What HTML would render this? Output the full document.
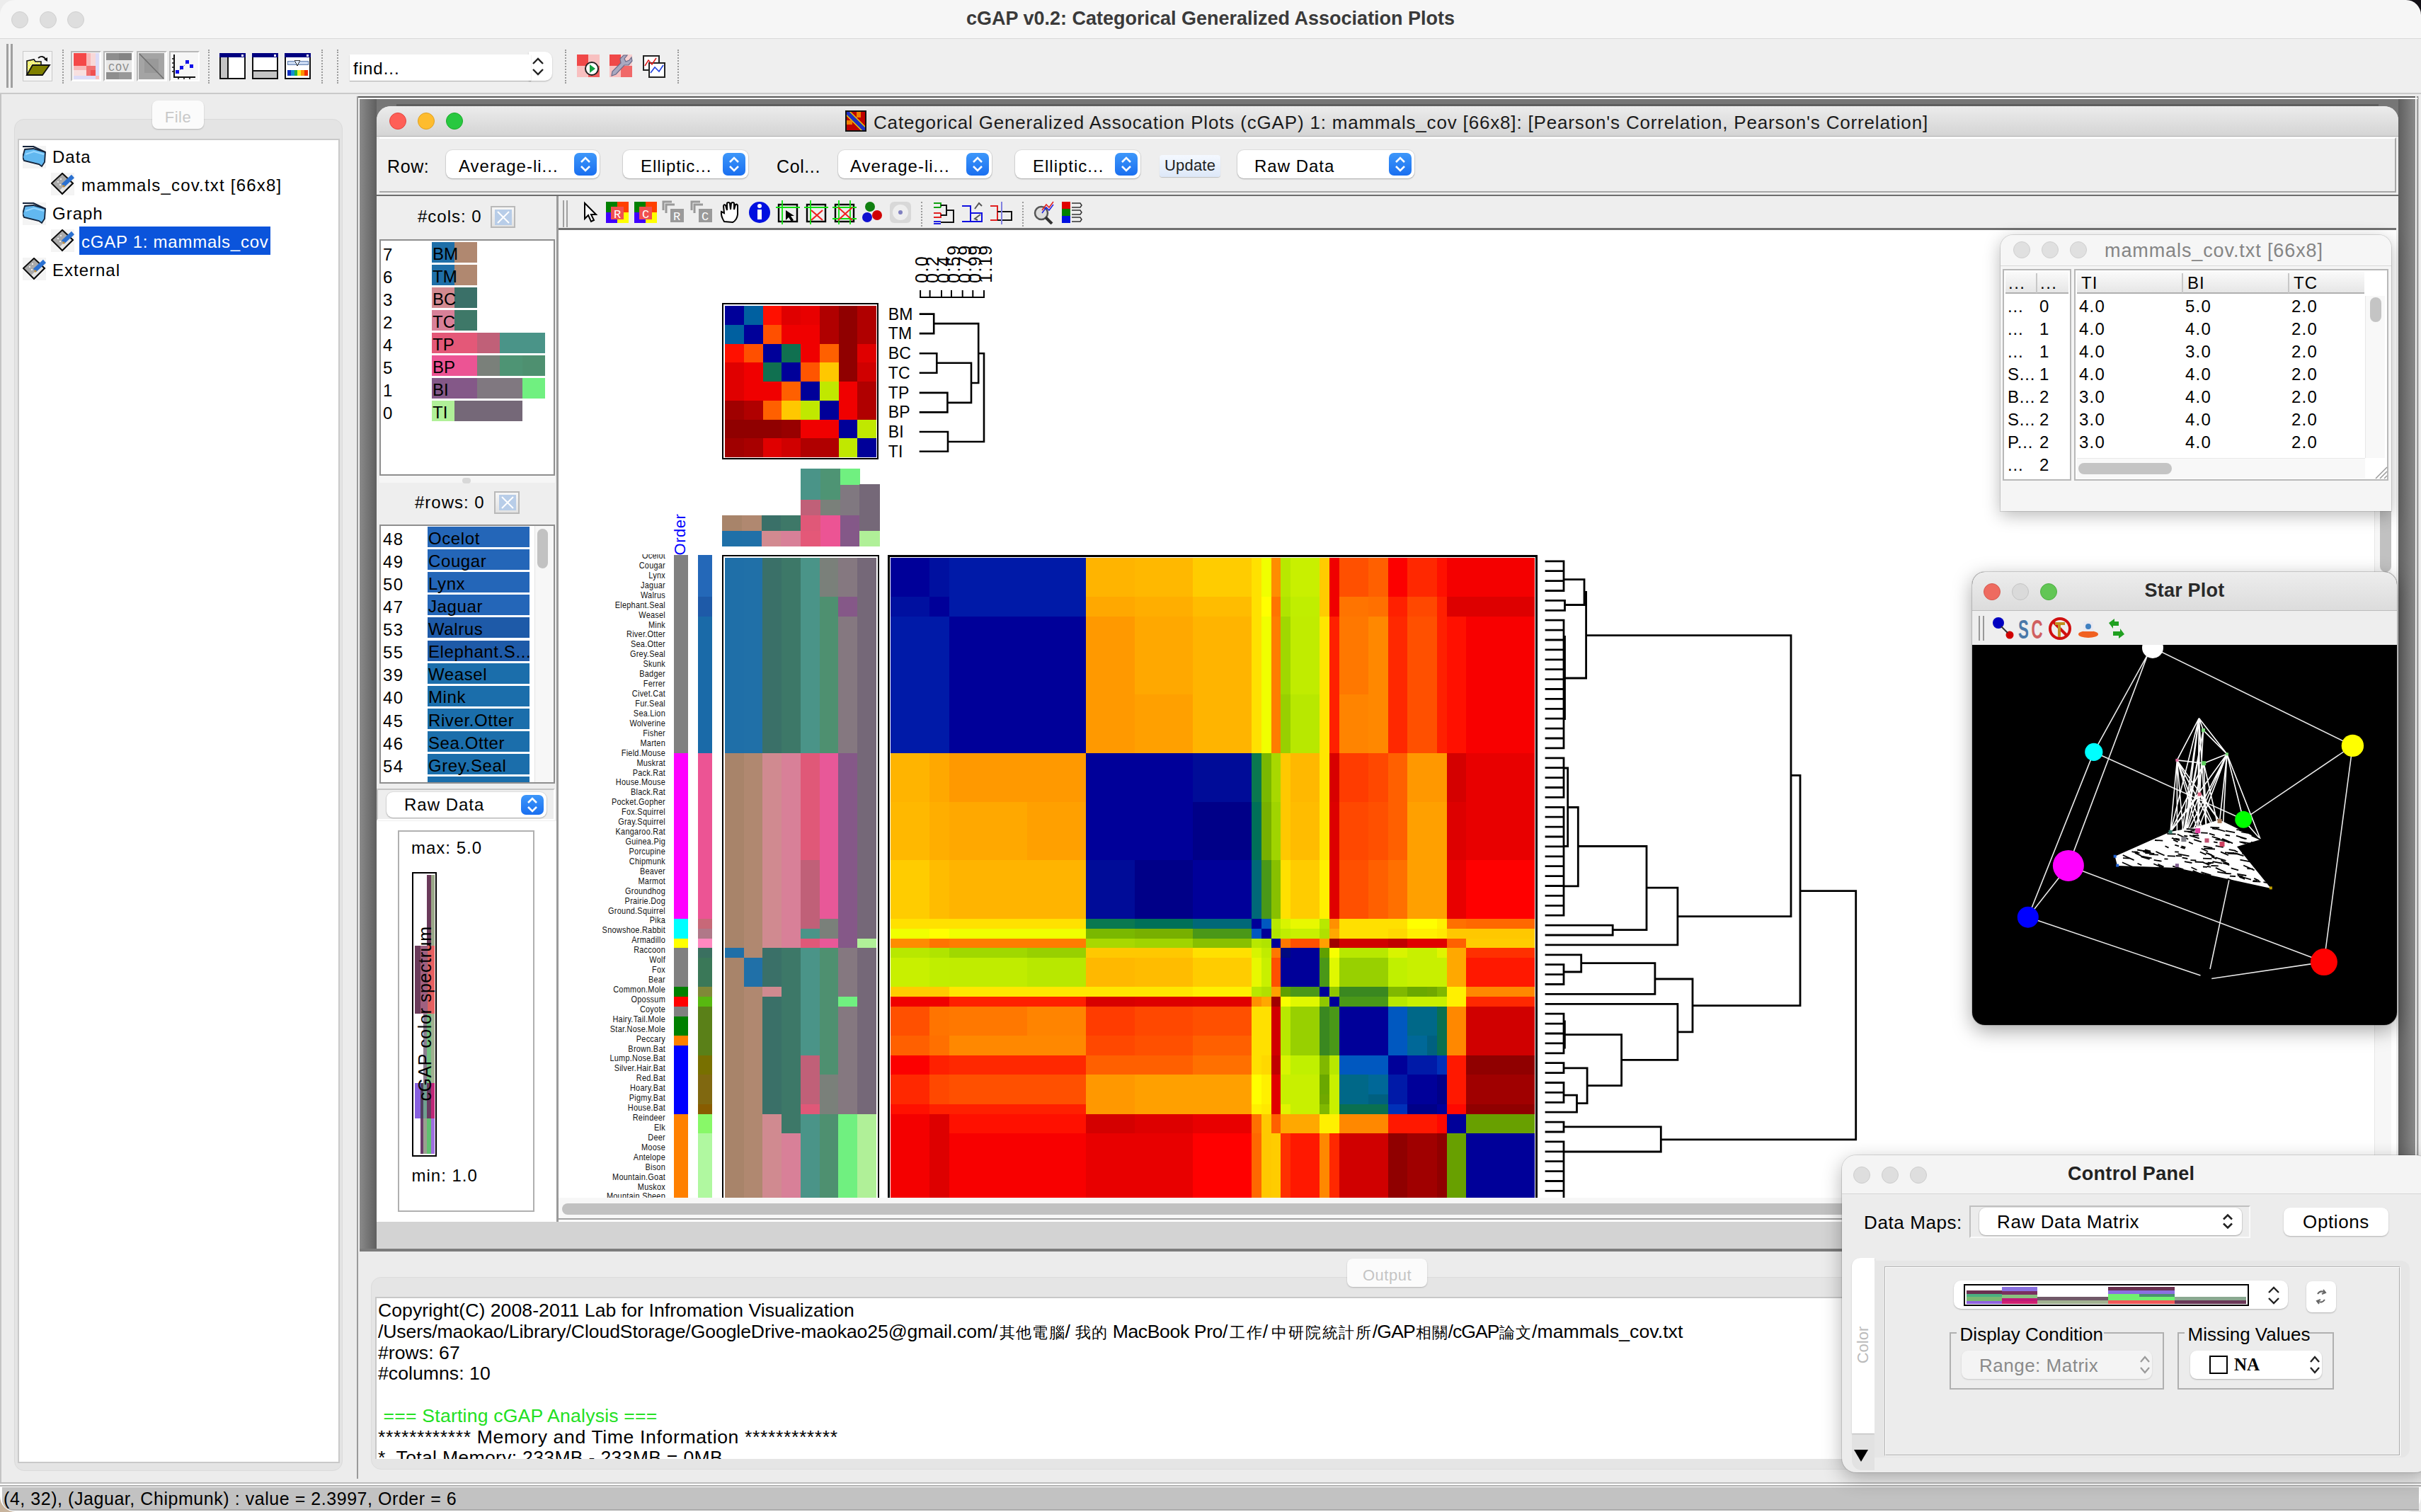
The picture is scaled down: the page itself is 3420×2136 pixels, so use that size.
<!DOCTYPE html><html><head><meta charset="utf-8"><style>
html,body{margin:0;padding:0;width:3420px;height:2136px;overflow:hidden;font-family:"Liberation Sans", sans-serif;}
</style></head><body><div style="position:relative;width:3420px;height:2136px;overflow:hidden">
<div style="position:absolute;left:0px;top:0px;width:3420px;height:2136px;background:#ececec"></div><div style="position:absolute;left:3390px;top:0px;width:30px;height:30px;background:#121016"></div><div style="position:absolute;left:0px;top:2100px;width:36px;height:36px;background:#c8b49e"></div><div style="position:absolute;left:0px;top:0px;width:3420px;height:55px;background:#f6f6f6;border-top-right-radius:21px;border-top-left-radius:21px;border-bottom:1px solid #d9d9d9;box-sizing:border-box"></div><div style="position:absolute;left:16px;top:16px;width:24px;height:24px;border-radius:50%;background:#dedede;box-sizing:border-box;border:1px solid #d0d0d0"></div><div style="position:absolute;left:56px;top:16px;width:24px;height:24px;border-radius:50%;background:#dedede;box-sizing:border-box;border:1px solid #d0d0d0"></div><div style="position:absolute;left:95px;top:16px;width:24px;height:24px;border-radius:50%;background:#dedede;box-sizing:border-box;border:1px solid #d0d0d0"></div><div style="position:absolute;left:710.0px;width:2000px;text-align:center;top:13.1px;font-size:27px;line-height:27px;color:#3a3a3a;font-weight:bold;letter-spacing:0px;white-space:pre;">cGAP v0.2: Categorical Generalized Association Plots</div><div style="position:absolute;left:0px;top:55px;width:3420px;height:77px;background:#efefef"></div><div style="position:absolute;left:0px;top:131px;width:3420px;height:2px;background:#c9c9c9"></div><div style="position:absolute;left:0px;top:133px;width:504px;height:1962px;background:#ececec"></div><div style="position:absolute;left:0px;top:133px;width:2px;height:1961px;background:#c4c4c4"></div><div style="position:absolute;left:0px;top:2094px;width:3420px;height:2px;background:#bcbcbc"></div><div style="position:absolute;left:0px;top:2096px;width:3420px;height:40px;background:#fff;border-bottom-left-radius:22px;border-bottom-right-radius:22px;overflow:hidden"></div><div style="position:absolute;left:0px;top:2098px;width:3420px;height:2px;background:#b0b0b0"></div><div style="position:absolute;left:3px;top:2101px;width:3414px;height:31px;background:#c2c2c2;border-bottom:2px solid #ababab;border-bottom-left-radius:16px;box-sizing:content-box"></div><div style="position:absolute;left:5.0px;top:2104.8px;font-size:25px;line-height:25px;color:#000;font-weight:normal;letter-spacing:0.55px;white-space:pre;">(4, 32), (Jaguar, Chipmunk) : value = 2.3997, Order = 6</div><div style="position:absolute;left:20px;top:168px;width:464px;height:1910px;background:#e4e4e4;border-radius:14px;border:1px solid #dadada;box-sizing:border-box"></div><div style="position:absolute;left:215px;top:142px;width:73px;height:40px;background:#fbfbfb;border-radius:8px;box-shadow:0 1px 2px rgba(0,0,0,0.22)"></div><div style="position:absolute;left:-748.5px;width:2000px;text-align:center;top:155.4px;font-size:22px;line-height:22px;color:#c8c8c8;font-weight:normal;letter-spacing:0.5px;white-space:pre;text-shadow:0 1px 0 #fff">File</div><div style="position:absolute;left:25px;top:196px;width:455px;height:1871px;background:#fff;border:2px solid #c9c9c9;box-sizing:border-box"></div><svg style="position:absolute;left:32px;top:206px" width="33" height="32"><rect x="-1" y="-1" width="36" height="34" fill="#f4f4f4"/><path d="M3 5 L15 4 L32 9 L31 23 L27 29 L23 26 L2 21 L0 16 Z" fill="#62b8f0" stroke="#14233a" stroke-width="1.8"/><path d="M0 1 L15 1 L32 9" stroke="#14233a" stroke-width="2.2" fill="none"/><path d="M4 12 L16 8 L30 12" stroke="#9ad8ff" stroke-width="2" fill="none"/></svg><svg style="position:absolute;left:72px;top:244px" width="33" height="32"><rect x="-1" y="-1" width="36" height="34" fill="#f4f4f4"/><path d="M16 1 L31 15 L16 30 L1 15 Z" fill="#e4e4e4" stroke="#111" stroke-width="1.8"/><path d="M16 1 L1 15 L12 25 L26 11 Z" fill="#aaaaaa"/><path d="M16 1 L31 15 L16 30 L1 15 Z" fill="none" stroke="#111" stroke-width="1.8"/><circle cx="10" cy="13" r="1" fill="#fff"/><circle cx="14" cy="9" r="1" fill="#fff"/><circle cx="13" cy="17" r="1" fill="#fff"/><path d="M17 18 L31 5" stroke="#2a70d0" stroke-width="6"/><path d="M17 18 L19 20" stroke="#c09040" stroke-width="3"/></svg><svg style="position:absolute;left:32px;top:286px" width="33" height="32"><rect x="-1" y="-1" width="36" height="34" fill="#f4f4f4"/><path d="M3 5 L15 4 L32 9 L31 23 L27 29 L23 26 L2 21 L0 16 Z" fill="#62b8f0" stroke="#14233a" stroke-width="1.8"/><path d="M0 1 L15 1 L32 9" stroke="#14233a" stroke-width="2.2" fill="none"/><path d="M4 12 L16 8 L30 12" stroke="#9ad8ff" stroke-width="2" fill="none"/></svg><svg style="position:absolute;left:72px;top:324px" width="33" height="32"><rect x="-1" y="-1" width="36" height="34" fill="#f4f4f4"/><path d="M16 1 L31 15 L16 30 L1 15 Z" fill="#e4e4e4" stroke="#111" stroke-width="1.8"/><path d="M16 1 L1 15 L12 25 L26 11 Z" fill="#aaaaaa"/><path d="M16 1 L31 15 L16 30 L1 15 Z" fill="none" stroke="#111" stroke-width="1.8"/><circle cx="10" cy="13" r="1" fill="#fff"/><circle cx="14" cy="9" r="1" fill="#fff"/><circle cx="13" cy="17" r="1" fill="#fff"/><path d="M17 18 L31 5" stroke="#2a70d0" stroke-width="6"/><path d="M17 18 L19 20" stroke="#c09040" stroke-width="3"/></svg><svg style="position:absolute;left:32px;top:364px" width="33" height="32"><rect x="-1" y="-1" width="36" height="34" fill="#f4f4f4"/><path d="M16 1 L31 15 L16 30 L1 15 Z" fill="#e4e4e4" stroke="#111" stroke-width="1.8"/><path d="M16 1 L1 15 L12 25 L26 11 Z" fill="#aaaaaa"/><path d="M16 1 L31 15 L16 30 L1 15 Z" fill="none" stroke="#111" stroke-width="1.8"/><circle cx="10" cy="13" r="1" fill="#fff"/><circle cx="14" cy="9" r="1" fill="#fff"/><circle cx="13" cy="17" r="1" fill="#fff"/><path d="M17 18 L31 5" stroke="#2a70d0" stroke-width="6"/><path d="M17 18 L19 20" stroke="#c09040" stroke-width="3"/></svg><div style="position:absolute;left:74.0px;top:209.7px;font-size:24px;line-height:24px;color:#000;font-weight:normal;letter-spacing:1.0px;white-space:pre;">Data</div><div style="position:absolute;left:115.0px;top:250.2px;font-size:24px;line-height:24px;color:#000;font-weight:normal;letter-spacing:1.2px;white-space:pre;">mammals_cov.txt [66x8]</div><div style="position:absolute;left:74.0px;top:289.7px;font-size:24px;line-height:24px;color:#000;font-weight:normal;letter-spacing:1.0px;white-space:pre;">Graph</div><div style="position:absolute;left:112px;top:320px;width:270px;height:40px;background:#0b54db"></div><div style="position:absolute;left:115.0px;top:329.7px;font-size:24px;line-height:24px;color:#fff;font-weight:normal;letter-spacing:0.75px;white-space:pre;">cGAP 1: mammals_cov</div><div style="position:absolute;left:74.0px;top:369.7px;font-size:24px;line-height:24px;color:#000;font-weight:normal;letter-spacing:1.0px;white-space:pre;">External</div><div style="position:absolute;left:9px;top:62px;width:3px;height:62px;background:#a0a0a0"></div><div style="position:absolute;left:15px;top:62px;width:3px;height:62px;background:#a0a0a0"></div><div style="position:absolute;left:32px;top:72px;width:42px;height:43px;background:#f4f4f4;border:1px solid #c9c9c9;box-sizing:border-box"></div><svg style="position:absolute;left:36px;top:78px" width="36" height="32"><defs><pattern id="chk" width="4" height="4" patternUnits="userSpaceOnUse"><rect width="4" height="4" fill="#ffff40"/><rect width="2" height="2" fill="#e8e8c0"/><rect x="2" y="2" width="2" height="2" fill="#e8e8c0"/></pattern></defs><path d="M2 8 L12 6 L14 9 L22 9 L22 28 L2 28 Z" fill="url(#chk)" stroke="#111" stroke-width="1.6"/><path d="M2 28 L10 14 L34 14 L24 28 Z" fill="#808000" stroke="#111" stroke-width="1.8"/><path d="M18 4 Q24 -1 29 6" stroke="#111" stroke-width="1.8" fill="none"/><path d="M26 6 L31 9 L31 3 Z" fill="#111"/></svg><div style="position:absolute;left:88px;top:70px;width:0;height:48px;border-left:2px dotted #9a9a9a"></div><div style="position:absolute;left:100px;top:72px;width:43px;height:43px;background:#f6f6f6;border:2px solid #b8b8b8;border-right-color:#fff;border-bottom-color:#fff;box-sizing:border-box"></div><div style="position:absolute;left:146px;top:72px;width:43px;height:43px;background:#f6f6f6;border:2px solid #b8b8b8;border-right-color:#fff;border-bottom-color:#fff;box-sizing:border-box"></div><div style="position:absolute;left:193px;top:72px;width:43px;height:43px;background:#f6f6f6;border:2px solid #b8b8b8;border-right-color:#fff;border-bottom-color:#fff;box-sizing:border-box"></div><div style="position:absolute;left:239px;top:72px;width:43px;height:43px;background:#f6f6f6;border:2px solid #b8b8b8;border-right-color:#fff;border-bottom-color:#fff;box-sizing:border-box"></div><svg style="position:absolute;left:104px;top:75px" width="36" height="37" shape-rendering="crispEdges"><rect x="0" y="0" width="36" height="37" fill="#f8e0e0"/><rect x="0" y="0" width="18" height="18" fill="#f44848"/><rect x="18" y="0" width="6" height="18" fill="#f8b8b8"/><rect x="24" y="0" width="7" height="18" fill="#f8d8d8"/><rect x="31" y="0" width="5" height="37" fill="#dcdcf8"/><rect x="0" y="18" width="18" height="6" fill="#f8b8b8"/><rect x="18" y="18" width="13" height="14" fill="#f07070"/><rect x="24" y="24" width="7" height="8" fill="#f05050"/><rect x="0" y="32" width="31" height="5" fill="#dcdcf8"/><rect x="31" y="32" width="5" height="5" fill="#f8c0c0"/></svg><svg style="position:absolute;left:150px;top:75px" width="36" height="37" shape-rendering="crispEdges"><rect x="0" y="0" width="36" height="10" fill="#8e8e8e"/><rect x="18" y="0" width="18" height="10" fill="#848484"/><rect x="0" y="10" width="36" height="17" fill="#e8e8e8"/><rect x="0" y="27" width="36" height="10" fill="#8e8e8e"/><rect x="18" y="27" width="18" height="10" fill="#989898"/><text x="18" y="25" font-size="15" text-anchor="middle" fill="#8a8a8a" font-family="Liberation Mono" letter-spacing="1">COV</text></svg><svg style="position:absolute;left:196px;top:75px" width="36" height="37"><rect x="0" y="0" width="36" height="37" fill="#a4a4a4"/><rect x="8" y="8" width="20" height="20" fill="#999"/><path d="M1 1 L35 36" stroke="#6e6e6e" stroke-width="1.6"/></svg><svg style="position:absolute;left:242px;top:75px" width="36" height="37"><path d="M4 2 L4 34 L34 34" stroke="#111" stroke-width="2" fill="none"/><path d="M1 8 L4 8 M1 14 L4 14 M1 20 L4 20 M1 26 L4 26 M10 34 L10 37 M18 34 L18 37 M26 34 L26 37" stroke="#111" stroke-width="1.5"/><path d="M9 27 L15 21 L23 13 L29 19" stroke="#888" stroke-width="1" stroke-dasharray="2,2" fill="none"/><rect x="6" y="24" width="5" height="5" fill="#1010e8"/><rect x="12" y="18" width="5" height="5" fill="#1010e8"/><rect x="20" y="10" width="5" height="5" fill="#1010e8"/><rect x="26" y="16" width="5" height="5" fill="#1010e8"/></svg><svg style="position:absolute;left:310px;top:75px" width="37" height="37" shape-rendering="crispEdges"><rect x="1" y="1" width="35" height="35" fill="#fff" stroke="#111" stroke-width="2"/><rect x="0" y="0" width="37" height="6" fill="#000080"/><rect x="31" y="2" width="3" height="3" fill="#fff"/><rect x="2" y="6" width="9" height="29" fill="#c4c4c4"/><rect x="11" y="6" width="2" height="29" fill="#111"/></svg><svg style="position:absolute;left:356px;top:75px" width="37" height="37" shape-rendering="crispEdges"><rect x="1" y="1" width="35" height="35" fill="#fff" stroke="#111" stroke-width="2"/><rect x="0" y="0" width="37" height="6" fill="#000080"/><rect x="31" y="2" width="3" height="3" fill="#fff"/><rect x="2" y="25" width="33" height="10" fill="#c4c4c4"/><rect x="1" y="24" width="35" height="2" fill="#111"/></svg><svg style="position:absolute;left:402px;top:75px" width="37" height="37" shape-rendering="crispEdges"><rect x="1" y="1" width="35" height="35" fill="#fff" stroke="#111" stroke-width="2"/><rect x="0" y="0" width="37" height="6" fill="#000080"/><rect x="31" y="2" width="3" height="3" fill="#fff"/><rect x="4" y="11" width="29" height="5" fill="#c8d8f0" stroke="#6080b0" stroke-width="1"/><path d="M14 10 L22 10 L18 18 Z" fill="#e0ecff" stroke="#333" stroke-width="1"/><rect x="4" y="24" width="5" height="8" fill="#1030c0"/><rect x="9" y="24" width="5" height="8" fill="#1090d0"/><rect x="14" y="24" width="4" height="8" fill="#20b040"/><rect x="18" y="24" width="5" height="8" fill="#f0f020"/><rect x="23" y="24" width="5" height="8" fill="#ff9000"/><rect x="28" y="24" width="5" height="8" fill="#f03000"/></svg><div style="position:absolute;left:294px;top:70px;width:0;height:48px;border-left:2px dotted #9a9a9a"></div><div style="position:absolute;left:454px;top:70px;width:0;height:48px;border-left:2px dotted #9a9a9a"></div><div style="position:absolute;left:476px;top:70px;width:0;height:48px;border-left:2px dotted #9a9a9a"></div><div style="position:absolute;left:747px;top:73px;width:33px;height:41px;background:#fff;border-radius:0 10px 10px 0;box-shadow:0 1px 2px rgba(0,0,0,0.25)"></div><div style="position:absolute;left:494px;top:77px;width:256px;height:37px;background:#fff;box-shadow:0 1px 1px rgba(0,0,0,0.25)"></div><div style="position:absolute;left:499.0px;top:84.7px;font-size:24px;line-height:24px;color:#000;font-weight:normal;letter-spacing:1.0px;white-space:pre;">find...</div><svg style="position:absolute;left:748px;top:78px" width="24" height="32"><path d="M5 12 L12 5 L19 12 M5 20 L12 27 L19 20" stroke="#222" stroke-width="2.4" fill="none"/></svg><div style="position:absolute;left:798px;top:70px;width:0;height:48px;border-left:2px dotted #9a9a9a"></div><svg style="position:absolute;left:815px;top:77px" width="34" height="34"><rect x="0" y="0" width="16" height="16" fill="#f04848"/><rect x="16" y="0" width="16" height="16" fill="#f8c0c0"/><rect x="0" y="16" width="16" height="16" fill="#f8c0c0"/><rect x="16" y="16" width="16" height="16" fill="#f06060"/><circle cx="21" cy="20" r="9" fill="#fff" stroke="#222" stroke-width="2"/><path d="M18 14 L26 20 L18 26 Z" fill="#10a040"/></svg><svg style="position:absolute;left:861px;top:77px" width="34" height="34" shape-rendering="crispEdges"><rect x="0" y="0" width="16" height="16" fill="#f04848"/><rect x="16" y="0" width="16" height="16" fill="#f8d0d0"/><rect x="0" y="16" width="16" height="16" fill="#f8c0c0"/><rect x="16" y="16" width="16" height="16" fill="#f06868"/></svg><svg style="position:absolute;left:861px;top:77px" width="34" height="34"><path d="M3 30 L4 24 L16 12 L15 6 L20 1 L25 1 L21 6 L23 10 L28 8 L31 4 L32 9 L27 15 L21 15 L9 28 Z" fill="#a8a8c0" stroke="#6a6a88" stroke-width="1.2"/></svg><svg style="position:absolute;left:907px;top:77px" width="34" height="34"><rect x="2" y="2" width="22" height="20" fill="#fff" stroke="#222" stroke-width="2"/><rect x="10" y="12" width="22" height="20" fill="#fff" stroke="#222" stroke-width="2"/><path d="M4 16 L9 8 L14 14 L20 5" stroke="#e02020" stroke-width="1.6" fill="none"/><path d="M12 26 L18 18 L24 24 L30 15" stroke="#2040e0" stroke-width="1.6" fill="none"/></svg><div style="position:absolute;left:957px;top:70px;width:0;height:48px;border-left:2px dotted #9a9a9a"></div><div style="position:absolute;left:504px;top:136px;width:2916px;height:1632px;background:#777"></div><div style="position:absolute;left:504px;top:136px;width:2916px;height:2px;background:#5a5a5a"></div><div style="position:absolute;left:506px;top:138px;width:2912px;height:2px;background:#fafafa"></div><div style="position:absolute;left:504px;top:136px;width:2px;height:1632px;background:#9a9a9a"></div><div style="position:absolute;left:506px;top:140px;width:2px;height:1628px;background:#f2f2f2"></div><div style="position:absolute;left:508px;top:140px;width:24px;height:1628px;background:linear-gradient(90deg,#8a8a8a,#5f5f5f)"></div><div style="position:absolute;left:3388px;top:140px;width:24px;height:1628px;background:linear-gradient(90deg,#5f5f5f,#8a8a8a)"></div><div style="position:absolute;left:3412px;top:136px;width:2px;height:1632px;background:#fafafa"></div><div style="position:absolute;left:3415px;top:136px;width:2px;height:1632px;background:#bbb"></div><div style="position:absolute;left:3417px;top:136px;width:3px;height:1632px;background:#ececec"></div><div style="position:absolute;left:532px;top:140px;width:2856px;height:10px;background:#767676"></div><div style="position:absolute;left:560px;top:147px;width:2800px;height:3px;background:#5e5e5e"></div><div style="position:absolute;left:508px;top:1764px;width:2904px;height:4px;background:#7c7c7c"></div><div style="position:absolute;left:504px;top:1768px;width:2916px;height:321px;background:#ececec"></div><div style="position:absolute;left:504px;top:1768px;width:2px;height:321px;background:#9a9a9a"></div><div style="position:absolute;left:524px;top:1804px;width:2896px;height:272px;background:#e5e5e5;border-radius:14px 0 0 14px;border:1px solid #dcdcdc;box-sizing:border-box"></div><div style="position:absolute;left:1903px;top:1778px;width:113px;height:40px;background:#fbfbfb;border-radius:8px;box-shadow:0 1px 2px rgba(0,0,0,0.22)"></div><div style="position:absolute;left:959.5px;width:2000px;text-align:center;top:1791.4px;font-size:22px;line-height:22px;color:#c4c4c4;font-weight:normal;letter-spacing:0.5px;white-space:pre;text-shadow:0 1px 0 #fff">Output</div><div style="position:absolute;left:530px;top:1832px;width:2890px;height:229px;background:#fff;border-top:2px solid #c8c8c8;border-left:2px solid #c8c8c8;box-sizing:border-box"></div><div style="position:absolute;left:530px;top:1834px;width:2890px;height:227px;overflow:hidden"><div style="position:absolute;left:4.0px;top:3.5px;font-size:26.6px;line-height:26.6px;color:#000;font-weight:normal;letter-spacing:0.05px;white-space:pre;">Copyright(C) 2008-2011 Lab for Infromation Visualization</div><div style="position:absolute;left:4.0px;top:63.5px;font-size:26.6px;line-height:26.6px;color:#000;font-weight:normal;letter-spacing:0.05px;white-space:pre;">#rows: 67</div><div style="position:absolute;left:4.0px;top:92.9px;font-size:26.6px;line-height:26.6px;color:#000;font-weight:normal;letter-spacing:0.05px;white-space:pre;">#columns: 10</div><div style="position:absolute;left:4.0px;top:153.2px;font-size:26.6px;line-height:26.6px;color:#22e022;font-weight:normal;letter-spacing:0.2px;white-space:pre;"> === Starting cGAP Analysis ===</div><div style="position:absolute;left:4.0px;top:182.5px;font-size:26.6px;line-height:26.6px;color:#000;font-weight:normal;letter-spacing:0.63px;white-space:pre;">************ Memory and Time Information ************</div><div style="position:absolute;left:4.0px;top:212.0px;font-size:26.6px;line-height:26.6px;color:#000;font-weight:normal;letter-spacing:0.3px;white-space:pre;">*  Total Memory: 233MB - 233MB = 0MB</div><div style="position:absolute;left:3.9px;top:33.9px;font-size:26.6px;line-height:26.6px;color:#000;font-weight:normal;letter-spacing:-0.09px;white-space:pre;">/Users/maokao/Library/CloudStorage/GoogleDrive-maokao25@gmail.com/</div><div style="position:absolute;left:881.0px;top:36.4px;width:23.4px;height:26px;overflow:hidden;font-size:22px;line-height:26px;color:#000;text-align:center">其</div><div style="position:absolute;left:904.4px;top:36.4px;width:23.4px;height:26px;overflow:hidden;font-size:22px;line-height:26px;color:#000;text-align:center">他</div><div style="position:absolute;left:927.8px;top:36.4px;width:23.4px;height:26px;overflow:hidden;font-size:22px;line-height:26px;color:#000;text-align:center">電</div><div style="position:absolute;left:951.2px;top:36.4px;width:23.4px;height:26px;overflow:hidden;font-size:22px;line-height:26px;color:#000;text-align:center">腦</div><div style="position:absolute;left:974.6px;top:33.9px;font-size:26.6px;line-height:26.6px;color:#000;font-weight:normal;letter-spacing:0px;white-space:pre;">/</div><div style="position:absolute;left:988.5px;top:36.4px;width:23.1px;height:26px;overflow:hidden;font-size:22px;line-height:26px;color:#000;text-align:center">我</div><div style="position:absolute;left:1011.6px;top:36.4px;width:23.1px;height:26px;overflow:hidden;font-size:22px;line-height:26px;color:#000;text-align:center">的</div><div style="position:absolute;left:1034.7px;top:33.9px;font-size:26.6px;line-height:26.6px;color:#000;font-weight:normal;letter-spacing:-0.39px;white-space:pre;"> MacBook Pro/</div><div style="position:absolute;left:1205.5px;top:36.4px;width:24.1px;height:26px;overflow:hidden;font-size:22px;line-height:26px;color:#000;text-align:center">工</div><div style="position:absolute;left:1229.6px;top:36.4px;width:24.1px;height:26px;overflow:hidden;font-size:22px;line-height:26px;color:#000;text-align:center">作</div><div style="position:absolute;left:1253.8px;top:33.9px;font-size:26.6px;line-height:26.6px;color:#000;font-weight:normal;letter-spacing:0px;white-space:pre;">/</div><div style="position:absolute;left:1265.6px;top:36.4px;width:23.7px;height:26px;overflow:hidden;font-size:22px;line-height:26px;color:#000;text-align:center">中</div><div style="position:absolute;left:1289.3px;top:36.4px;width:23.7px;height:26px;overflow:hidden;font-size:22px;line-height:26px;color:#000;text-align:center">研</div><div style="position:absolute;left:1313.0px;top:36.4px;width:23.7px;height:26px;overflow:hidden;font-size:22px;line-height:26px;color:#000;text-align:center">院</div><div style="position:absolute;left:1336.7px;top:36.4px;width:23.7px;height:26px;overflow:hidden;font-size:22px;line-height:26px;color:#000;text-align:center">統</div><div style="position:absolute;left:1360.4px;top:36.4px;width:23.7px;height:26px;overflow:hidden;font-size:22px;line-height:26px;color:#000;text-align:center">計</div><div style="position:absolute;left:1384.1px;top:36.4px;width:23.7px;height:26px;overflow:hidden;font-size:22px;line-height:26px;color:#000;text-align:center">所</div><div style="position:absolute;left:1408.8px;top:33.9px;font-size:26.6px;line-height:26.6px;color:#000;font-weight:normal;letter-spacing:-0.85px;white-space:pre;">/GAP</div><div style="position:absolute;left:1469.0px;top:36.4px;width:23.3px;height:26px;overflow:hidden;font-size:22px;line-height:26px;color:#000;text-align:center">相</div><div style="position:absolute;left:1492.3px;top:36.4px;width:23.3px;height:26px;overflow:hidden;font-size:22px;line-height:26px;color:#000;text-align:center">關</div><div style="position:absolute;left:1515.6px;top:33.9px;font-size:26.6px;line-height:26.6px;color:#000;font-weight:normal;letter-spacing:-1.0px;white-space:pre;">/cGAP</div><div style="position:absolute;left:1587.4px;top:36.4px;width:23.3px;height:26px;overflow:hidden;font-size:22px;line-height:26px;color:#000;text-align:center">論</div><div style="position:absolute;left:1610.7px;top:36.4px;width:23.3px;height:26px;overflow:hidden;font-size:22px;line-height:26px;color:#000;text-align:center">文</div><div style="position:absolute;left:1634.0px;top:33.9px;font-size:26.6px;line-height:26.6px;color:#000;font-weight:normal;letter-spacing:0.07px;white-space:pre;">/mammals_cov.txt</div></div><div style="position:absolute;left:532px;top:150px;width:2856px;height:1614px;background:#eeeeee;border-radius:20px 20px 0 0;overflow:hidden"></div><div style="position:absolute;left:532px;top:150px;width:2856px;height:43px;background:linear-gradient(#ececec,#d4d4d4);border-radius:20px 20px 0 0;border-bottom:1px solid #b4b4b4;box-sizing:border-box"></div><div style="position:absolute;left:550px;top:159px;width:24px;height:24px;border-radius:50%;background:#fe5f57;box-sizing:border-box;border:1px solid #e14640"></div><div style="position:absolute;left:590px;top:159px;width:24px;height:24px;border-radius:50%;background:#febc2e;box-sizing:border-box;border:1px solid #dfa023"></div><div style="position:absolute;left:630px;top:159px;width:24px;height:24px;border-radius:50%;background:#28c840;box-sizing:border-box;border:1px solid #1aab29"></div><svg style="position:absolute;left:1194px;top:156px" width="30" height="30"><rect x="0" y="0" width="30" height="30" fill="#111"/><rect x="2" y="2" width="26" height="26" fill="#c00000"/><path d="M2 2 L8 2 L28 22 L28 28 L22 28 L2 8 Z" fill="#f0d000"/><path d="M2 2 L6 2 L28 24 L28 28 L24 28 L2 6 Z" fill="#2030c0"/><rect x="2" y="14" width="8" height="6" fill="#f08000"/><rect x="16" y="2" width="6" height="8" fill="#f08000"/></svg><div style="position:absolute;left:1234.0px;top:159.5px;font-size:26px;line-height:26px;color:#1a1a1a;font-weight:normal;letter-spacing:0.83px;white-space:pre;">Categorical Generalized Assocation Plots (cGAP) 1: mammals_cov [66x8]: [Pearson's Correlation, Pearson's Correlation]</div><div style="position:absolute;left:536px;top:194px;width:2849px;height:78px;border-top:2px solid #fff;border-bottom:2px solid #a8a8a8;border-right:2px solid #a8a8a8;box-sizing:border-box"></div><div style="position:absolute;left:532px;top:275px;width:2856px;height:2px;background:#6d6d6d"></div><div style="position:absolute;left:547.0px;top:222.5px;font-size:25px;line-height:25px;color:#000;font-weight:normal;letter-spacing:0.6px;white-space:pre;">Row:</div><div style="position:absolute;left:630px;top:212px;width:217px;height:40px;background:#fff;border-radius:9px;box-shadow:0 1px 2px rgba(0,0,0,0.25), 0 0 0 1px rgba(0,0,0,0.06)"></div><div style="position:absolute;left:811px;top:216px;width:32px;height:32px;background:linear-gradient(#3d97fa,#1a6ff0);border-radius:7px"></div><svg style="position:absolute;left:811px;top:216px" width="32" height="32"><path d="M10 13.0 L16 7.0 L22 13.0 M10 19.0 L16 25.0 L22 19.0" stroke="#fff" stroke-width="2.6" fill="none"/></svg><div style="position:absolute;left:648.0px;top:222.7px;font-size:24px;line-height:24px;color:#000;font-weight:normal;letter-spacing:1.0px;white-space:pre;">Average-li...</div><div style="position:absolute;left:880px;top:212px;width:177px;height:40px;background:#fff;border-radius:9px;box-shadow:0 1px 2px rgba(0,0,0,0.25), 0 0 0 1px rgba(0,0,0,0.06)"></div><div style="position:absolute;left:1021px;top:216px;width:32px;height:32px;background:linear-gradient(#3d97fa,#1a6ff0);border-radius:7px"></div><svg style="position:absolute;left:1021px;top:216px" width="32" height="32"><path d="M10 13.0 L16 7.0 L22 13.0 M10 19.0 L16 25.0 L22 19.0" stroke="#fff" stroke-width="2.6" fill="none"/></svg><div style="position:absolute;left:905.0px;top:222.7px;font-size:24px;line-height:24px;color:#000;font-weight:normal;letter-spacing:1.0px;white-space:pre;">Elliptic...</div><div style="position:absolute;left:1097.0px;top:222.5px;font-size:25px;line-height:25px;color:#000;font-weight:normal;letter-spacing:0.6px;white-space:pre;">Col...</div><div style="position:absolute;left:1184px;top:212px;width:217px;height:40px;background:#fff;border-radius:9px;box-shadow:0 1px 2px rgba(0,0,0,0.25), 0 0 0 1px rgba(0,0,0,0.06)"></div><div style="position:absolute;left:1365px;top:216px;width:32px;height:32px;background:linear-gradient(#3d97fa,#1a6ff0);border-radius:7px"></div><svg style="position:absolute;left:1365px;top:216px" width="32" height="32"><path d="M10 13.0 L16 7.0 L22 13.0 M10 19.0 L16 25.0 L22 19.0" stroke="#fff" stroke-width="2.6" fill="none"/></svg><div style="position:absolute;left:1201.0px;top:222.7px;font-size:24px;line-height:24px;color:#000;font-weight:normal;letter-spacing:1.0px;white-space:pre;">Average-li...</div><div style="position:absolute;left:1434px;top:212px;width:177px;height:40px;background:#fff;border-radius:9px;box-shadow:0 1px 2px rgba(0,0,0,0.25), 0 0 0 1px rgba(0,0,0,0.06)"></div><div style="position:absolute;left:1575px;top:216px;width:32px;height:32px;background:linear-gradient(#3d97fa,#1a6ff0);border-radius:7px"></div><svg style="position:absolute;left:1575px;top:216px" width="32" height="32"><path d="M10 13.0 L16 7.0 L22 13.0 M10 19.0 L16 25.0 L22 19.0" stroke="#fff" stroke-width="2.6" fill="none"/></svg><div style="position:absolute;left:1459.0px;top:222.7px;font-size:24px;line-height:24px;color:#000;font-weight:normal;letter-spacing:1.0px;white-space:pre;">Elliptic...</div><div style="position:absolute;left:1638px;top:219px;width:86px;height:31px;background:linear-gradient(#f4f8ff,#dde8f8);border-radius:4px;box-shadow:0 1px 1px rgba(0,0,0,0.2)"></div><div style="position:absolute;left:681.0px;width:2000px;text-align:center;top:223.4px;font-size:22px;line-height:22px;color:#222;font-weight:normal;letter-spacing:0.2px;white-space:pre;">Update</div><div style="position:absolute;left:1748px;top:212px;width:250px;height:40px;background:#fff;border-radius:9px;box-shadow:0 1px 2px rgba(0,0,0,0.25), 0 0 0 1px rgba(0,0,0,0.06)"></div><div style="position:absolute;left:1962px;top:216px;width:32px;height:32px;background:linear-gradient(#3d97fa,#1a6ff0);border-radius:7px"></div><svg style="position:absolute;left:1962px;top:216px" width="32" height="32"><path d="M10 13.0 L16 7.0 L22 13.0 M10 19.0 L16 25.0 L22 19.0" stroke="#fff" stroke-width="2.6" fill="none"/></svg><div style="position:absolute;left:1772.0px;top:222.7px;font-size:24px;line-height:24px;color:#000;font-weight:normal;letter-spacing:1.0px;white-space:pre;">Raw Data</div><div style="position:absolute;left:532px;top:277px;width:256px;height:1449px;background:#eeeeee"></div><div style="position:absolute;left:786px;top:277px;width:3px;height:1449px;background:#9a9a9a"></div><div style="position:absolute;left:590.0px;top:293.7px;font-size:24px;line-height:24px;color:#000;font-weight:normal;letter-spacing:1.0px;white-space:pre;">#cols: 0</div><div style="position:absolute;left:693px;top:291px;width:35px;height:31px;background:linear-gradient(#f6f6f6,#e2e2e2);border:2px solid #b9b9b9;box-sizing:border-box"></div><svg style="position:absolute;left:699px;top:296px" width="24" height="22"><rect x="0" y="0" width="24" height="22" fill="#b8cde8"/><path d="M4 3 L20 19 M20 3 L4 19" stroke="#fff" stroke-width="2"/></svg><div style="position:absolute;left:536px;top:338px;width:248px;height:334px;background:#fff;border:2px solid #8e8e8e;box-sizing:border-box"></div><div style="position:absolute;left:541.0px;top:347.7px;font-size:24px;line-height:24px;color:#000;font-weight:normal;letter-spacing:0px;white-space:pre;">7</div><div style="position:absolute;left:610px;top:342px;width:32px;height:29px;background:#1f6fa8"></div><div style="position:absolute;left:642px;top:342px;width:32px;height:29px;background:#b08870"></div><div style="position:absolute;left:611.0px;top:346.7px;font-size:24px;line-height:24px;color:#000;font-weight:normal;letter-spacing:0px;white-space:pre;">BM</div><div style="position:absolute;left:541.0px;top:379.7px;font-size:24px;line-height:24px;color:#000;font-weight:normal;letter-spacing:0px;white-space:pre;">6</div><div style="position:absolute;left:610px;top:374px;width:32px;height:29px;background:#1f6fa8"></div><div style="position:absolute;left:642px;top:374px;width:32px;height:29px;background:#b08870"></div><div style="position:absolute;left:611.0px;top:378.7px;font-size:24px;line-height:24px;color:#000;font-weight:normal;letter-spacing:0px;white-space:pre;">TM</div><div style="position:absolute;left:541.0px;top:411.7px;font-size:24px;line-height:24px;color:#000;font-weight:normal;letter-spacing:0px;white-space:pre;">3</div><div style="position:absolute;left:610px;top:406px;width:32px;height:29px;background:#d28a90"></div><div style="position:absolute;left:642px;top:406px;width:32px;height:29px;background:#3a7068"></div><div style="position:absolute;left:611.0px;top:410.7px;font-size:24px;line-height:24px;color:#000;font-weight:normal;letter-spacing:0px;white-space:pre;">BC</div><div style="position:absolute;left:541.0px;top:443.7px;font-size:24px;line-height:24px;color:#000;font-weight:normal;letter-spacing:0px;white-space:pre;">2</div><div style="position:absolute;left:610px;top:438px;width:32px;height:29px;background:#d88098"></div><div style="position:absolute;left:642px;top:438px;width:32px;height:29px;background:#3e7868"></div><div style="position:absolute;left:611.0px;top:442.7px;font-size:24px;line-height:24px;color:#000;font-weight:normal;letter-spacing:0px;white-space:pre;">TC</div><div style="position:absolute;left:541.0px;top:475.7px;font-size:24px;line-height:24px;color:#000;font-weight:normal;letter-spacing:0px;white-space:pre;">4</div><div style="position:absolute;left:610px;top:470px;width:32px;height:29px;background:#e45878"></div><div style="position:absolute;left:642px;top:470px;width:32px;height:29px;background:#e45878"></div><div style="position:absolute;left:674px;top:470px;width:32px;height:29px;background:#c06078"></div><div style="position:absolute;left:706px;top:470px;width:32px;height:29px;background:#4a9488"></div><div style="position:absolute;left:738px;top:470px;width:32px;height:29px;background:#4a9488"></div><div style="position:absolute;left:611.0px;top:474.7px;font-size:24px;line-height:24px;color:#000;font-weight:normal;letter-spacing:0px;white-space:pre;">TP</div><div style="position:absolute;left:541.0px;top:507.7px;font-size:24px;line-height:24px;color:#000;font-weight:normal;letter-spacing:0px;white-space:pre;">5</div><div style="position:absolute;left:610px;top:502px;width:32px;height:29px;background:#ec5494"></div><div style="position:absolute;left:642px;top:502px;width:32px;height:29px;background:#ec5494"></div><div style="position:absolute;left:674px;top:502px;width:32px;height:29px;background:#7a807a"></div><div style="position:absolute;left:706px;top:502px;width:32px;height:29px;background:#4e9474"></div><div style="position:absolute;left:738px;top:502px;width:32px;height:29px;background:#4e9070"></div><div style="position:absolute;left:611.0px;top:506.7px;font-size:24px;line-height:24px;color:#000;font-weight:normal;letter-spacing:0px;white-space:pre;">BP</div><div style="position:absolute;left:541.0px;top:539.7px;font-size:24px;line-height:24px;color:#000;font-weight:normal;letter-spacing:0px;white-space:pre;">1</div><div style="position:absolute;left:610px;top:534px;width:32px;height:29px;background:#845888"></div><div style="position:absolute;left:642px;top:534px;width:32px;height:29px;background:#845888"></div><div style="position:absolute;left:674px;top:534px;width:32px;height:29px;background:#807880"></div><div style="position:absolute;left:706px;top:534px;width:32px;height:29px;background:#807880"></div><div style="position:absolute;left:738px;top:534px;width:32px;height:29px;background:#70f080"></div><div style="position:absolute;left:611.0px;top:538.7px;font-size:24px;line-height:24px;color:#000;font-weight:normal;letter-spacing:0px;white-space:pre;">BI</div><div style="position:absolute;left:541.0px;top:571.7px;font-size:24px;line-height:24px;color:#000;font-weight:normal;letter-spacing:0px;white-space:pre;">0</div><div style="position:absolute;left:610px;top:566px;width:32px;height:29px;background:#b0f098"></div><div style="position:absolute;left:642px;top:566px;width:32px;height:29px;background:#756878"></div><div style="position:absolute;left:674px;top:566px;width:32px;height:29px;background:#756878"></div><div style="position:absolute;left:706px;top:566px;width:32px;height:29px;background:#756878"></div><div style="position:absolute;left:611.0px;top:570.7px;font-size:24px;line-height:24px;color:#000;font-weight:normal;letter-spacing:0px;white-space:pre;">TI</div><div style="position:absolute;left:536px;top:672px;width:248px;height:10px;background:#f6f6f6"></div><div style="position:absolute;left:653px;top:675px;width:12px;height:8px;border-radius:4px;background:#d8d8d8"></div><div style="position:absolute;left:586.0px;top:697.7px;font-size:24px;line-height:24px;color:#000;font-weight:normal;letter-spacing:1.0px;white-space:pre;">#rows: 0</div><div style="position:absolute;left:698px;top:694px;width:36px;height:32px;background:linear-gradient(#f6f6f6,#e2e2e2);border:2px solid #b9b9b9;box-sizing:border-box"></div><svg style="position:absolute;left:705px;top:699px" width="24" height="22"><rect x="0" y="0" width="24" height="22" fill="#b8cde8"/><path d="M4 3 L20 19 M20 3 L4 19" stroke="#fff" stroke-width="2"/></svg><div style="position:absolute;left:536px;top:741px;width:248px;height:366px;background:#fff;border:2px solid #8e8e8e;box-sizing:border-box"></div><div style="position:absolute;left:538px;top:743px;width:217px;height:362px;overflow:hidden"><div style="position:absolute;left:3.0px;top:6.7px;font-size:24px;line-height:24px;color:#000;font-weight:normal;letter-spacing:1.5px;white-space:pre;">48</div><div style="position:absolute;left:66px;top:1.0px;width:144px;height:29px;background:#2466b8"></div><div style="position:absolute;left:67.0px;top:5.7px;font-size:24px;line-height:24px;color:#000;font-weight:normal;letter-spacing:0.6px;white-space:pre;">Ocelot</div><div style="position:absolute;left:3.0px;top:38.8px;font-size:24px;line-height:24px;color:#000;font-weight:normal;letter-spacing:1.5px;white-space:pre;">49</div><div style="position:absolute;left:66px;top:33.1px;width:144px;height:29px;background:#2466b8"></div><div style="position:absolute;left:67.0px;top:37.8px;font-size:24px;line-height:24px;color:#000;font-weight:normal;letter-spacing:0.6px;white-space:pre;">Cougar</div><div style="position:absolute;left:3.0px;top:70.9px;font-size:24px;line-height:24px;color:#000;font-weight:normal;letter-spacing:1.5px;white-space:pre;">50</div><div style="position:absolute;left:66px;top:65.2px;width:144px;height:29px;background:#2466b8"></div><div style="position:absolute;left:67.0px;top:69.9px;font-size:24px;line-height:24px;color:#000;font-weight:normal;letter-spacing:0.6px;white-space:pre;">Lynx</div><div style="position:absolute;left:3.0px;top:103.0px;font-size:24px;line-height:24px;color:#000;font-weight:normal;letter-spacing:1.5px;white-space:pre;">47</div><div style="position:absolute;left:66px;top:97.30000000000001px;width:144px;height:29px;background:#2466b8"></div><div style="position:absolute;left:67.0px;top:102.0px;font-size:24px;line-height:24px;color:#000;font-weight:normal;letter-spacing:0.6px;white-space:pre;">Jaguar</div><div style="position:absolute;left:3.0px;top:135.1px;font-size:24px;line-height:24px;color:#000;font-weight:normal;letter-spacing:1.5px;white-space:pre;">53</div><div style="position:absolute;left:66px;top:129.4px;width:144px;height:29px;background:#1e5aa8"></div><div style="position:absolute;left:67.0px;top:134.1px;font-size:24px;line-height:24px;color:#000;font-weight:normal;letter-spacing:0.6px;white-space:pre;">Walrus</div><div style="position:absolute;left:3.0px;top:167.2px;font-size:24px;line-height:24px;color:#000;font-weight:normal;letter-spacing:1.5px;white-space:pre;">55</div><div style="position:absolute;left:66px;top:161.5px;width:144px;height:29px;background:#1e5aa8"></div><div style="position:absolute;left:67.0px;top:166.2px;font-size:24px;line-height:24px;color:#000;font-weight:normal;letter-spacing:0.6px;white-space:pre;">Elephant.S...</div><div style="position:absolute;left:3.0px;top:199.3px;font-size:24px;line-height:24px;color:#000;font-weight:normal;letter-spacing:1.5px;white-space:pre;">39</div><div style="position:absolute;left:66px;top:193.60000000000002px;width:144px;height:29px;background:#1b6eab"></div><div style="position:absolute;left:67.0px;top:198.3px;font-size:24px;line-height:24px;color:#000;font-weight:normal;letter-spacing:0.6px;white-space:pre;">Weasel</div><div style="position:absolute;left:3.0px;top:231.4px;font-size:24px;line-height:24px;color:#000;font-weight:normal;letter-spacing:1.5px;white-space:pre;">40</div><div style="position:absolute;left:66px;top:225.70000000000002px;width:144px;height:29px;background:#1b6eab"></div><div style="position:absolute;left:67.0px;top:230.4px;font-size:24px;line-height:24px;color:#000;font-weight:normal;letter-spacing:0.6px;white-space:pre;">Mink</div><div style="position:absolute;left:3.0px;top:263.5px;font-size:24px;line-height:24px;color:#000;font-weight:normal;letter-spacing:1.5px;white-space:pre;">45</div><div style="position:absolute;left:66px;top:257.8px;width:144px;height:29px;background:#1b6eab"></div><div style="position:absolute;left:67.0px;top:262.5px;font-size:24px;line-height:24px;color:#000;font-weight:normal;letter-spacing:0.6px;white-space:pre;">River.Otter</div><div style="position:absolute;left:3.0px;top:295.6px;font-size:24px;line-height:24px;color:#000;font-weight:normal;letter-spacing:1.5px;white-space:pre;">46</div><div style="position:absolute;left:66px;top:289.90000000000003px;width:144px;height:29px;background:#1b6eab"></div><div style="position:absolute;left:67.0px;top:294.6px;font-size:24px;line-height:24px;color:#000;font-weight:normal;letter-spacing:0.6px;white-space:pre;">Sea.Otter</div><div style="position:absolute;left:3.0px;top:327.7px;font-size:24px;line-height:24px;color:#000;font-weight:normal;letter-spacing:1.5px;white-space:pre;">54</div><div style="position:absolute;left:66px;top:322.0px;width:144px;height:29px;background:#1b6eab"></div><div style="position:absolute;left:67.0px;top:326.7px;font-size:24px;line-height:24px;color:#000;font-weight:normal;letter-spacing:0.6px;white-space:pre;">Grey.Seal</div><div style="position:absolute;left:3.0px;top:359.8px;font-size:24px;line-height:24px;color:#000;font-weight:normal;letter-spacing:1.5px;white-space:pre;">44</div><div style="position:absolute;left:66px;top:354.1px;width:144px;height:29px;background:#1b6eab"></div><div style="position:absolute;left:67.0px;top:358.8px;font-size:24px;line-height:24px;color:#000;font-weight:normal;letter-spacing:0.6px;white-space:pre;">Skunk</div></div><div style="position:absolute;left:755px;top:743px;width:27px;height:362px;background:#f7f7f7;border-left:1px solid #e4e4e4;box-sizing:border-box"></div><div style="position:absolute;left:759px;top:747px;width:15px;height:56px;border-radius:8px;background:#c2c2c2"></div><div style="position:absolute;left:532px;top:1114px;width:252px;height:45px;border:2px solid #c4c4c4;border-right-color:#fff;border-bottom-color:#fff;box-sizing:border-box"></div><div style="position:absolute;left:546px;top:1119px;width:226px;height:36px;background:#fff;border-radius:9px;box-shadow:0 1px 2px rgba(0,0,0,0.25), 0 0 0 1px rgba(0,0,0,0.06)"></div><div style="position:absolute;left:736px;top:1123px;width:32px;height:28px;background:linear-gradient(#3d97fa,#1a6ff0);border-radius:7px"></div><svg style="position:absolute;left:736px;top:1123px" width="32" height="28"><path d="M10 11.0 L16 5.0 L22 11.0 M10 17.0 L16 23.0 L22 17.0" stroke="#fff" stroke-width="2.6" fill="none"/></svg><div style="position:absolute;left:571.0px;top:1125.4px;font-size:24px;line-height:24px;color:#000;font-weight:normal;letter-spacing:1.0px;white-space:pre;">Raw Data</div><div style="position:absolute;left:532px;top:1160px;width:254px;height:566px;background:#fff"></div><div style="position:absolute;left:562px;top:1173px;width:193px;height:539px;border:2px solid #b0b0b0;box-sizing:border-box"></div><div style="position:absolute;left:581.0px;top:1185.5px;font-size:24px;line-height:24px;color:#000;font-weight:normal;letter-spacing:1.0px;white-space:pre;">max: 5.0</div><div style="position:absolute;left:581.5px;top:1649.4px;font-size:24px;line-height:24px;color:#000;font-weight:normal;letter-spacing:1.0px;white-space:pre;">min: 1.0</div><div style="position:absolute;left:582px;top:1232px;width:35px;height:402px;border:2px solid #000;box-sizing:border-box;background:#fff"></div><div style="position:absolute;left:603px;top:1236px;width:6px;height:100px;background:#6a3a5a"></div><div style="position:absolute;left:609px;top:1236px;width:5px;height:100px;background:#9aa888"></div><div style="position:absolute;left:598px;top:1336px;width:6px;height:96px;background:#8a6a80"></div><div style="position:absolute;left:604px;top:1336px;width:5px;height:96px;background:#e06060"></div><div style="position:absolute;left:609px;top:1336px;width:5px;height:96px;background:#e86060"></div><div style="position:absolute;left:586px;top:1336px;width:8px;height:96px;background:#6a3a5a"></div><div style="position:absolute;left:594px;top:1336px;width:9px;height:96px;background:#a06080"></div><div style="position:absolute;left:598px;top:1432px;width:5px;height:98px;background:#8e7e90"></div><div style="position:absolute;left:603px;top:1432px;width:6px;height:98px;background:#70c080"></div><div style="position:absolute;left:609px;top:1432px;width:5px;height:98px;background:#a0b090"></div><div style="position:absolute;left:586px;top:1530px;width:8px;height:50px;background:#8860e0"></div><div style="position:absolute;left:594px;top:1530px;width:4px;height:50px;background:#504060"></div><div style="position:absolute;left:598px;top:1530px;width:5px;height:50px;background:#70a090"></div><div style="position:absolute;left:603px;top:1530px;width:6px;height:50px;background:#6a3a60"></div><div style="position:absolute;left:609px;top:1530px;width:5px;height:50px;background:#c02878"></div><div style="position:absolute;left:594px;top:1580px;width:4px;height:50px;background:#6a3a6a"></div><div style="position:absolute;left:598px;top:1580px;width:5px;height:50px;background:#9aa090"></div><div style="position:absolute;left:603px;top:1580px;width:6px;height:50px;background:#60c070"></div><div style="position:absolute;left:609px;top:1580px;width:5px;height:50px;background:#a070e0"></div><div style="position:absolute;left:599.5px;top:1432px;width:0;height:0"><div style="position:absolute;left:-200px;top:-13px;width:400px;height:26px;text-align:center;font-size:25px;line-height:26px;color:#000;transform:rotate(-90deg);letter-spacing:0.6px">cGAP color spectrum</div></div><div style="position:absolute;left:789px;top:277px;width:2596px;height:47px;background:#eeeeee"></div><div style="position:absolute;left:789px;top:322px;width:2596px;height:3px;background:#707070"></div><div style="position:absolute;left:795px;top:283px;width:2px;height:38px;background:#a0a0a0"></div><div style="position:absolute;left:800px;top:283px;width:2px;height:38px;background:#a0a0a0"></div><svg style="position:absolute;left:820px;top:283px" width="34" height="34"><path d="M6 4 L6 26 L11 21 L15 30 L19 28 L15 20 L22 20 Z" fill="#fff" stroke="#000" stroke-width="2"/></svg><svg style="position:absolute;left:855px;top:283px" width="34" height="34"><rect x="1" y="2" width="16" height="15" fill="#008000"/><rect x="17" y="2" width="16" height="15" fill="#ff4000"/><rect x="1" y="17" width="16" height="15" fill="#4000ff"/><rect x="17" y="17" width="16" height="15" fill="#ffff00"/><rect x="8" y="9" width="18" height="18" fill="#f05050"/><text x="17" y="25" font-size="17" text-anchor="middle" fill="#fff" font-family="Liberation Mono">R</text></svg><svg style="position:absolute;left:895px;top:283px" width="34" height="34"><rect x="1" y="2" width="16" height="15" fill="#008000"/><rect x="17" y="2" width="16" height="15" fill="#ff4000"/><rect x="1" y="17" width="16" height="15" fill="#4000ff"/><rect x="17" y="17" width="16" height="15" fill="#ffff00"/><rect x="8" y="9" width="18" height="18" fill="#f05050"/><text x="17" y="25" font-size="17" text-anchor="middle" fill="#fff" font-family="Liberation Mono">C</text></svg><svg style="position:absolute;left:935px;top:283px" width="34" height="34"><path d="M2 14 L2 2 L14 2 M6 18 L6 6 L18 6" stroke="#999" stroke-width="3" fill="none"/><rect x="12" y="12" width="19" height="19" fill="#9a9a9a"/><text x="21" y="28" font-size="17" text-anchor="middle" fill="#fff" font-family="Liberation Mono">R</text></svg><svg style="position:absolute;left:975px;top:283px" width="34" height="34"><path d="M2 14 L2 2 L14 2 M6 18 L6 6 L18 6" stroke="#999" stroke-width="3" fill="none"/><rect x="12" y="12" width="19" height="19" fill="#9a9a9a"/><text x="21" y="28" font-size="17" text-anchor="middle" fill="#fff" font-family="Liberation Mono">C</text></svg><svg style="position:absolute;left:1015px;top:283px" width="34" height="34"><path d="M8 30 Q3 22 4 16 L8 18 L7 8 Q8 5 10 7 L12 14 L12 4 Q14 2 16 4 L17 13 L18 4 Q20 2 22 4 L22 13 L24 6 Q26 5 27 7 L27 20 Q26 28 20 31 Z" fill="#fff" stroke="#000" stroke-width="2"/></svg><svg style="position:absolute;left:1056px;top:283px" width="34" height="34"><ellipse cx="17" cy="17" rx="15" ry="15" fill="#0010e0"/><rect x="14" y="13" width="6" height="14" fill="#fff"/><circle cx="17" cy="8" r="3" fill="#fff"/></svg><svg style="position:absolute;left:1096px;top:283px" width="34" height="34"><rect x="4" y="6" width="26" height="24" fill="none" stroke="#000" stroke-width="2.4"/><path d="M0 10 L34 10 M9 0 L9 34" stroke="#10e010" stroke-width="1.8"/><path d="M14 14 L14 28 L18 24 L22 30 L25 28 L21 22 L26 22 Z" fill="#000"/></svg><svg style="position:absolute;left:1136px;top:283px" width="34" height="34"><rect x="4" y="6" width="26" height="24" fill="none" stroke="#000" stroke-width="2.4"/><path d="M0 10 L34 10 M9 0 L9 34" stroke="#10e010" stroke-width="1.8"/><path d="M10 14 L26 28 M26 14 L10 28" stroke="#f02020" stroke-width="2.2"/></svg><svg style="position:absolute;left:1176px;top:283px" width="34" height="34"><rect x="4" y="6" width="26" height="24" fill="none" stroke="#000" stroke-width="2.4"/><path d="M0 10 L34 10 M0 26 L34 26 M9 0 L9 34 M25 0 L25 34" stroke="#10e010" stroke-width="1.8"/><path d="M8 10 L28 28 M28 10 L8 28" stroke="#f02020" stroke-width="2"/></svg><svg style="position:absolute;left:1215px;top:283px" width="34" height="34"><circle cx="10" cy="24" r="7" fill="#1010d0"/><circle cx="24" cy="21" r="7" fill="#d00000"/><circle cx="14" cy="9" r="7" fill="#108010"/></svg><svg style="position:absolute;left:1255px;top:283px" width="34" height="34"><rect x="2" y="2" width="30" height="30" rx="6" fill="#d8d8d8"/><circle cx="17" cy="17" r="11" fill="#eee"/><circle cx="17" cy="17" r="3" fill="#8080c0"/></svg><div style="position:absolute;left:1301px;top:285px;width:0;height:35px;border-left:2px dotted #9a9a9a"></div><svg style="position:absolute;left:1317px;top:283px" width="34" height="34"><path d="M2 4 L12 4 L12 10 M2 10 L12 10" stroke="#10a010" stroke-width="2" fill="none"/><path d="M2 18 L12 18 M2 24 L12 24 L12 18" stroke="#e02020" stroke-width="2" fill="none"/><path d="M2 30 L12 30 M2 33 L12 33" stroke="#2020e0" stroke-width="2" fill="none"/><path d="M12 7 L20 7 L20 21 L12 21 M20 14 L30 14 L30 31 L12 31" stroke="#111" stroke-width="2" fill="none"/></svg><svg style="position:absolute;left:1357px;top:283px" width="34" height="34"><path d="M2 8 L14 8 L14 30 L2 30 M14 18 L30 18 L30 30 L14 30" stroke="#1010e0" stroke-width="2" fill="none"/><path d="M20 12 L26 4 L30 8" stroke="#555" stroke-width="2" fill="none"/><path d="M28 20 L20 26 L24 28" stroke="#555" stroke-width="2" fill="none"/></svg><svg style="position:absolute;left:1397px;top:283px" width="34" height="34"><path d="M2 8 L12 8 L12 28 L2 28" stroke="#e02020" stroke-width="2" fill="none"/><path d="M12 16 L32 16 L32 28 L12 28" stroke="#111" stroke-width="2" fill="none"/><path d="M18 2 L18 34" stroke="#8080e0" stroke-width="2"/></svg><div style="position:absolute;left:1444px;top:285px;width:0;height:35px;border-left:2px dotted #9a9a9a"></div><svg style="position:absolute;left:1458px;top:283px" width="34" height="34"><circle cx="13" cy="18" r="9" fill="#ddd" stroke="#555" stroke-width="2.5"/><path d="M19 24 L28 33" stroke="#333" stroke-width="4"/><path d="M14 14 L20 6 L24 10 L30 2" stroke="#e02020" stroke-width="1.5" fill="none"/><path d="M14 18 L20 10 L24 14 L30 6" stroke="#2020e0" stroke-width="1.5" fill="none"/></svg><svg style="position:absolute;left:1498px;top:283px" width="34" height="34"><rect x="2" y="2" width="12" height="10" fill="#e00000"/><rect x="2" y="12" width="12" height="10" fill="#008000"/><rect x="2" y="22" width="12" height="10" fill="#0010e0"/><path d="M16 4 L28 4 L30 7 L28 10 L16 10 M16 14 L28 14 L30 17 L28 20 L16 20 M16 24 L28 24 L30 27 L28 30 L16 30" stroke="#333" stroke-width="1.5" fill="none"/></svg><div style="position:absolute;left:789px;top:325px;width:2596px;height:1367px;background:#fff"></div><div style="position:absolute;left:789px;top:1692px;width:2596px;height:30px;background:#f7f7f7"></div><div style="position:absolute;left:794px;top:1700px;width:2580px;height:16px;border-radius:8px;background:#c1c1c1"></div><div style="position:absolute;left:789px;top:1721px;width:2596px;height:2px;background:#a0a0a0"></div><div style="position:absolute;left:789px;top:1723px;width:2596px;height:3px;background:#fff"></div><div style="position:absolute;left:532px;top:1726px;width:2856px;height:38px;background:#d3d3d3"></div><div style="position:absolute;left:532px;top:1764px;width:2856px;height:4px;background:#7c7c7c"></div><div style="position:absolute;left:1254px;top:784px;width:918px;height:908px;border:3px solid #000;border-bottom:none;box-sizing:border-box;background:#fff"></div><svg style="position:absolute;left:1258.3px;top:788.3px" width="909.6" height="903.7" shape-rendering="crispEdges"><rect x="0.00" y="0.00" width="55.73" height="55.73" fill="#000099"/><rect x="55.13" y="0.00" width="28.16" height="55.73" fill="#0010a0"/><rect x="82.69" y="0.00" width="110.86" height="55.73" fill="#001aa8"/><rect x="192.95" y="0.00" width="83.29" height="55.73" fill="#001aa8"/><rect x="275.64" y="0.00" width="69.51" height="55.73" fill="#ffb400"/><rect x="344.55" y="0.00" width="83.29" height="55.73" fill="#ffb800"/><rect x="427.24" y="0.00" width="83.29" height="55.73" fill="#ffcc00"/><rect x="509.93" y="0.00" width="14.38" height="55.73" fill="#ffe100"/><rect x="523.72" y="0.00" width="14.38" height="55.73" fill="#f0ff00"/><rect x="537.50" y="0.00" width="14.38" height="55.73" fill="#ff8c00"/><rect x="551.28" y="0.00" width="14.38" height="55.73" fill="#b8e800"/><rect x="565.06" y="0.00" width="41.95" height="55.73" fill="#c8f000"/><rect x="606.41" y="0.00" width="14.38" height="55.73" fill="#ffcc00"/><rect x="620.19" y="0.00" width="14.38" height="55.73" fill="#f00000"/><rect x="633.97" y="0.00" width="41.95" height="55.73" fill="#ff5000"/><rect x="675.32" y="0.00" width="28.16" height="55.73" fill="#ff6000"/><rect x="702.88" y="0.00" width="28.16" height="55.73" fill="#fc0000"/><rect x="730.45" y="0.00" width="28.16" height="55.73" fill="#ff2800"/><rect x="758.01" y="0.00" width="14.38" height="55.73" fill="#ff2800"/><rect x="771.79" y="0.00" width="14.38" height="55.73" fill="#ff1000"/><rect x="785.57" y="0.00" width="28.16" height="55.73" fill="#f40000"/><rect x="813.14" y="0.00" width="97.07" height="55.73" fill="#f40000"/><rect x="0.00" y="55.13" width="55.73" height="28.16" fill="#0010a0"/><rect x="55.13" y="55.13" width="28.16" height="28.16" fill="#000099"/><rect x="82.69" y="55.13" width="110.86" height="28.16" fill="#001aa8"/><rect x="192.95" y="55.13" width="83.29" height="28.16" fill="#001aa8"/><rect x="275.64" y="55.13" width="69.51" height="28.16" fill="#ffa800"/><rect x="344.55" y="55.13" width="83.29" height="28.16" fill="#ffae00"/><rect x="427.24" y="55.13" width="83.29" height="28.16" fill="#ffbc00"/><rect x="509.93" y="55.13" width="14.38" height="28.16" fill="#ffe100"/><rect x="523.72" y="55.13" width="14.38" height="28.16" fill="#ffff00"/><rect x="537.50" y="55.13" width="14.38" height="28.16" fill="#ff7400"/><rect x="551.28" y="55.13" width="14.38" height="28.16" fill="#b0e400"/><rect x="565.06" y="55.13" width="41.95" height="28.16" fill="#c0ee00"/><rect x="606.41" y="55.13" width="14.38" height="28.16" fill="#ffcc00"/><rect x="620.19" y="55.13" width="14.38" height="28.16" fill="#f00000"/><rect x="633.97" y="55.13" width="41.95" height="28.16" fill="#ff7400"/><rect x="675.32" y="55.13" width="28.16" height="28.16" fill="#ff7000"/><rect x="702.88" y="55.13" width="28.16" height="28.16" fill="#ff2000"/><rect x="730.45" y="55.13" width="28.16" height="28.16" fill="#ff4800"/><rect x="758.01" y="55.13" width="14.38" height="28.16" fill="#ff4800"/><rect x="771.79" y="55.13" width="14.38" height="28.16" fill="#ff2000"/><rect x="785.57" y="55.13" width="28.16" height="28.16" fill="#dd0000"/><rect x="813.14" y="55.13" width="97.07" height="28.16" fill="#dd0000"/><rect x="0.00" y="82.69" width="55.73" height="110.86" fill="#001aa8"/><rect x="55.13" y="82.69" width="28.16" height="110.86" fill="#001aa8"/><rect x="82.69" y="82.69" width="110.86" height="110.86" fill="#000099"/><rect x="192.95" y="82.69" width="83.29" height="110.86" fill="#000099"/><rect x="275.64" y="82.69" width="69.51" height="110.86" fill="#ff9900"/><rect x="344.55" y="82.69" width="83.29" height="110.86" fill="#ffa800"/><rect x="427.24" y="82.69" width="83.29" height="110.86" fill="#ffb400"/><rect x="509.93" y="82.69" width="14.38" height="110.86" fill="#ffe100"/><rect x="523.72" y="82.69" width="14.38" height="110.86" fill="#f0ff00"/><rect x="537.50" y="82.69" width="14.38" height="110.86" fill="#ff7c00"/><rect x="551.28" y="82.69" width="14.38" height="110.86" fill="#a0d800"/><rect x="565.06" y="82.69" width="41.95" height="110.86" fill="#c0ec00"/><rect x="606.41" y="82.69" width="14.38" height="110.86" fill="#ffe600"/><rect x="620.19" y="82.69" width="14.38" height="110.86" fill="#ff2000"/><rect x="633.97" y="82.69" width="41.95" height="110.86" fill="#ff7800"/><rect x="675.32" y="82.69" width="28.16" height="110.86" fill="#ff8800"/><rect x="702.88" y="82.69" width="28.16" height="110.86" fill="#ff2800"/><rect x="730.45" y="82.69" width="28.16" height="110.86" fill="#ff5000"/><rect x="758.01" y="82.69" width="14.38" height="110.86" fill="#ff5000"/><rect x="771.79" y="82.69" width="14.38" height="110.86" fill="#ff2000"/><rect x="785.57" y="82.69" width="28.16" height="110.86" fill="#ff1000"/><rect x="813.14" y="82.69" width="97.07" height="110.86" fill="#f80000"/><rect x="0.00" y="192.95" width="55.73" height="83.29" fill="#001aa8"/><rect x="55.13" y="192.95" width="28.16" height="83.29" fill="#001aa8"/><rect x="82.69" y="192.95" width="110.86" height="83.29" fill="#000099"/><rect x="192.95" y="192.95" width="83.29" height="83.29" fill="#000099"/><rect x="275.64" y="192.95" width="69.51" height="83.29" fill="#ff9900"/><rect x="344.55" y="192.95" width="83.29" height="83.29" fill="#ffa000"/><rect x="427.24" y="192.95" width="83.29" height="83.29" fill="#ffb400"/><rect x="509.93" y="192.95" width="14.38" height="83.29" fill="#ffe100"/><rect x="523.72" y="192.95" width="14.38" height="83.29" fill="#f0ff00"/><rect x="537.50" y="192.95" width="14.38" height="83.29" fill="#ff7c00"/><rect x="551.28" y="192.95" width="14.38" height="83.29" fill="#98d000"/><rect x="565.06" y="192.95" width="41.95" height="83.29" fill="#b8e800"/><rect x="606.41" y="192.95" width="14.38" height="83.29" fill="#ffe600"/><rect x="620.19" y="192.95" width="14.38" height="83.29" fill="#ff2000"/><rect x="633.97" y="192.95" width="41.95" height="83.29" fill="#ff8400"/><rect x="675.32" y="192.95" width="28.16" height="83.29" fill="#ff8800"/><rect x="702.88" y="192.95" width="28.16" height="83.29" fill="#ff2800"/><rect x="730.45" y="192.95" width="28.16" height="83.29" fill="#ff5000"/><rect x="758.01" y="192.95" width="14.38" height="83.29" fill="#ff5000"/><rect x="771.79" y="192.95" width="14.38" height="83.29" fill="#ff2000"/><rect x="785.57" y="192.95" width="28.16" height="83.29" fill="#ff1000"/><rect x="813.14" y="192.95" width="97.07" height="83.29" fill="#f80000"/><rect x="0.00" y="275.64" width="55.73" height="69.51" fill="#ffb400"/><rect x="55.13" y="275.64" width="28.16" height="69.51" fill="#ffa800"/><rect x="82.69" y="275.64" width="110.86" height="69.51" fill="#ff9900"/><rect x="192.95" y="275.64" width="83.29" height="69.51" fill="#ff9900"/><rect x="275.64" y="275.64" width="69.51" height="69.51" fill="#000099"/><rect x="344.55" y="275.64" width="83.29" height="69.51" fill="#000099"/><rect x="427.24" y="275.64" width="83.29" height="69.51" fill="#000c98"/><rect x="509.93" y="275.64" width="14.38" height="69.51" fill="#0a7850"/><rect x="523.72" y="275.64" width="14.38" height="69.51" fill="#7ab800"/><rect x="537.50" y="275.64" width="14.38" height="69.51" fill="#a8d800"/><rect x="551.28" y="275.64" width="14.38" height="69.51" fill="#ffc800"/><rect x="565.06" y="275.64" width="41.95" height="69.51" fill="#ffb800"/><rect x="606.41" y="275.64" width="14.38" height="69.51" fill="#ffe600"/><rect x="620.19" y="275.64" width="14.38" height="69.51" fill="#d80000"/><rect x="633.97" y="275.64" width="41.95" height="69.51" fill="#ff3c00"/><rect x="675.32" y="275.64" width="28.16" height="69.51" fill="#ff4800"/><rect x="702.88" y="275.64" width="28.16" height="69.51" fill="#ff6000"/><rect x="730.45" y="275.64" width="28.16" height="69.51" fill="#ff9800"/><rect x="758.01" y="275.64" width="14.38" height="69.51" fill="#ff9800"/><rect x="771.79" y="275.64" width="14.38" height="69.51" fill="#ff9800"/><rect x="785.57" y="275.64" width="28.16" height="69.51" fill="#d40000"/><rect x="813.14" y="275.64" width="97.07" height="69.51" fill="#e80000"/><rect x="0.00" y="344.55" width="55.73" height="83.29" fill="#ffb800"/><rect x="55.13" y="344.55" width="28.16" height="83.29" fill="#ffae00"/><rect x="82.69" y="344.55" width="110.86" height="83.29" fill="#ffa800"/><rect x="192.95" y="344.55" width="83.29" height="83.29" fill="#ffa000"/><rect x="275.64" y="344.55" width="69.51" height="83.29" fill="#000099"/><rect x="344.55" y="344.55" width="83.29" height="83.29" fill="#000099"/><rect x="427.24" y="344.55" width="83.29" height="83.29" fill="#000088"/><rect x="509.93" y="344.55" width="14.38" height="83.29" fill="#007058"/><rect x="523.72" y="344.55" width="14.38" height="83.29" fill="#78b000"/><rect x="537.50" y="344.55" width="14.38" height="83.29" fill="#a0d400"/><rect x="551.28" y="344.55" width="14.38" height="83.29" fill="#ffc800"/><rect x="565.06" y="344.55" width="41.95" height="83.29" fill="#ffbc00"/><rect x="606.41" y="344.55" width="14.38" height="83.29" fill="#ffe600"/><rect x="620.19" y="344.55" width="14.38" height="83.29" fill="#dd0000"/><rect x="633.97" y="344.55" width="41.95" height="83.29" fill="#ff4800"/><rect x="675.32" y="344.55" width="28.16" height="83.29" fill="#ff5000"/><rect x="702.88" y="344.55" width="28.16" height="83.29" fill="#ff6000"/><rect x="730.45" y="344.55" width="28.16" height="83.29" fill="#ffa000"/><rect x="758.01" y="344.55" width="14.38" height="83.29" fill="#ffa000"/><rect x="771.79" y="344.55" width="14.38" height="83.29" fill="#ffa000"/><rect x="785.57" y="344.55" width="28.16" height="83.29" fill="#dd0000"/><rect x="813.14" y="344.55" width="97.07" height="83.29" fill="#e80000"/><rect x="0.00" y="427.24" width="55.73" height="83.29" fill="#ffcc00"/><rect x="55.13" y="427.24" width="28.16" height="83.29" fill="#ffbc00"/><rect x="82.69" y="427.24" width="110.86" height="83.29" fill="#ffb400"/><rect x="192.95" y="427.24" width="83.29" height="83.29" fill="#ffb400"/><rect x="275.64" y="427.24" width="69.51" height="83.29" fill="#000c98"/><rect x="344.55" y="427.24" width="83.29" height="83.29" fill="#000088"/><rect x="427.24" y="427.24" width="83.29" height="83.29" fill="#000099"/><rect x="509.93" y="427.24" width="14.38" height="83.29" fill="#006878"/><rect x="523.72" y="427.24" width="14.38" height="83.29" fill="#4a9818"/><rect x="537.50" y="427.24" width="14.38" height="83.29" fill="#88c000"/><rect x="551.28" y="427.24" width="14.38" height="83.29" fill="#ffe000"/><rect x="565.06" y="427.24" width="41.95" height="83.29" fill="#ffcc00"/><rect x="606.41" y="427.24" width="14.38" height="83.29" fill="#fff000"/><rect x="620.19" y="427.24" width="14.38" height="83.29" fill="#e00000"/><rect x="633.97" y="427.24" width="41.95" height="83.29" fill="#ff5000"/><rect x="675.32" y="427.24" width="28.16" height="83.29" fill="#ff6000"/><rect x="702.88" y="427.24" width="28.16" height="83.29" fill="#ff7000"/><rect x="730.45" y="427.24" width="28.16" height="83.29" fill="#ffa000"/><rect x="758.01" y="427.24" width="14.38" height="83.29" fill="#ffa000"/><rect x="771.79" y="427.24" width="14.38" height="83.29" fill="#ffa000"/><rect x="785.57" y="427.24" width="28.16" height="83.29" fill="#e80000"/><rect x="813.14" y="427.24" width="97.07" height="83.29" fill="#ff0000"/><rect x="0.00" y="509.93" width="55.73" height="14.38" fill="#ffe100"/><rect x="55.13" y="509.93" width="28.16" height="14.38" fill="#ffe100"/><rect x="82.69" y="509.93" width="110.86" height="14.38" fill="#ffe100"/><rect x="192.95" y="509.93" width="83.29" height="14.38" fill="#ffe100"/><rect x="275.64" y="509.93" width="69.51" height="14.38" fill="#0a7850"/><rect x="344.55" y="509.93" width="83.29" height="14.38" fill="#007058"/><rect x="427.24" y="509.93" width="83.29" height="14.38" fill="#006878"/><rect x="509.93" y="509.93" width="14.38" height="14.38" fill="#000099"/><rect x="523.72" y="509.93" width="14.38" height="14.38" fill="#0058c0"/><rect x="537.50" y="509.93" width="14.38" height="14.38" fill="#b8e800"/><rect x="551.28" y="509.93" width="14.38" height="14.38" fill="#d8f400"/><rect x="565.06" y="509.93" width="41.95" height="14.38" fill="#e8f800"/><rect x="606.41" y="509.93" width="14.38" height="14.38" fill="#b8e800"/><rect x="620.19" y="509.93" width="14.38" height="14.38" fill="#ff9000"/><rect x="633.97" y="509.93" width="41.95" height="14.38" fill="#ffe000"/><rect x="675.32" y="509.93" width="28.16" height="14.38" fill="#ffe000"/><rect x="702.88" y="509.93" width="28.16" height="14.38" fill="#ffe000"/><rect x="730.45" y="509.93" width="28.16" height="14.38" fill="#ffff00"/><rect x="758.01" y="509.93" width="14.38" height="14.38" fill="#ffff00"/><rect x="771.79" y="509.93" width="14.38" height="14.38" fill="#fff000"/><rect x="785.57" y="509.93" width="28.16" height="14.38" fill="#ff7000"/><rect x="813.14" y="509.93" width="97.07" height="14.38" fill="#ff6800"/><rect x="0.00" y="523.72" width="55.73" height="14.38" fill="#f0ff00"/><rect x="55.13" y="523.72" width="28.16" height="14.38" fill="#ffff00"/><rect x="82.69" y="523.72" width="110.86" height="14.38" fill="#f0ff00"/><rect x="192.95" y="523.72" width="83.29" height="14.38" fill="#f0ff00"/><rect x="275.64" y="523.72" width="69.51" height="14.38" fill="#7ab800"/><rect x="344.55" y="523.72" width="83.29" height="14.38" fill="#78b000"/><rect x="427.24" y="523.72" width="83.29" height="14.38" fill="#4a9818"/><rect x="509.93" y="523.72" width="14.38" height="14.38" fill="#0058c0"/><rect x="523.72" y="523.72" width="14.38" height="14.38" fill="#000099"/><rect x="537.50" y="523.72" width="14.38" height="14.38" fill="#b0e400"/><rect x="551.28" y="523.72" width="14.38" height="14.38" fill="#c0ec00"/><rect x="565.06" y="523.72" width="41.95" height="14.38" fill="#c8f000"/><rect x="606.41" y="523.72" width="14.38" height="14.38" fill="#b0e000"/><rect x="620.19" y="523.72" width="14.38" height="14.38" fill="#ffa800"/><rect x="633.97" y="523.72" width="41.95" height="14.38" fill="#ffe000"/><rect x="675.32" y="523.72" width="28.16" height="14.38" fill="#ffe000"/><rect x="702.88" y="523.72" width="28.16" height="14.38" fill="#ffd800"/><rect x="730.45" y="523.72" width="28.16" height="14.38" fill="#fff000"/><rect x="758.01" y="523.72" width="14.38" height="14.38" fill="#fff000"/><rect x="771.79" y="523.72" width="14.38" height="14.38" fill="#ffe800"/><rect x="785.57" y="523.72" width="28.16" height="14.38" fill="#ffc800"/><rect x="813.14" y="523.72" width="97.07" height="14.38" fill="#ffc800"/><rect x="0.00" y="537.50" width="55.73" height="14.38" fill="#ff8c00"/><rect x="55.13" y="537.50" width="28.16" height="14.38" fill="#ff7400"/><rect x="82.69" y="537.50" width="110.86" height="14.38" fill="#ff7c00"/><rect x="192.95" y="537.50" width="83.29" height="14.38" fill="#ff7c00"/><rect x="275.64" y="537.50" width="69.51" height="14.38" fill="#a8d800"/><rect x="344.55" y="537.50" width="83.29" height="14.38" fill="#a0d400"/><rect x="427.24" y="537.50" width="83.29" height="14.38" fill="#88c000"/><rect x="509.93" y="537.50" width="14.38" height="14.38" fill="#b8e800"/><rect x="523.72" y="537.50" width="14.38" height="14.38" fill="#b0e400"/><rect x="537.50" y="537.50" width="14.38" height="14.38" fill="#000099"/><rect x="551.28" y="537.50" width="14.38" height="14.38" fill="#ff7800"/><rect x="565.06" y="537.50" width="41.95" height="14.38" fill="#ff5000"/><rect x="606.41" y="537.50" width="14.38" height="14.38" fill="#ffa000"/><rect x="620.19" y="537.50" width="14.38" height="14.38" fill="#a00000"/><rect x="633.97" y="537.50" width="41.95" height="14.38" fill="#d00000"/><rect x="675.32" y="537.50" width="28.16" height="14.38" fill="#d00000"/><rect x="702.88" y="537.50" width="28.16" height="14.38" fill="#c00000"/><rect x="730.45" y="537.50" width="28.16" height="14.38" fill="#e00000"/><rect x="758.01" y="537.50" width="14.38" height="14.38" fill="#e00000"/><rect x="771.79" y="537.50" width="14.38" height="14.38" fill="#e00000"/><rect x="785.57" y="537.50" width="28.16" height="14.38" fill="#ff6000"/><rect x="813.14" y="537.50" width="97.07" height="14.38" fill="#ffcc00"/><rect x="0.00" y="551.28" width="55.73" height="14.38" fill="#b8e800"/><rect x="55.13" y="551.28" width="28.16" height="14.38" fill="#b0e400"/><rect x="82.69" y="551.28" width="110.86" height="14.38" fill="#a0d800"/><rect x="192.95" y="551.28" width="83.29" height="14.38" fill="#98d000"/><rect x="275.64" y="551.28" width="69.51" height="14.38" fill="#ffc800"/><rect x="344.55" y="551.28" width="83.29" height="14.38" fill="#ffc800"/><rect x="427.24" y="551.28" width="83.29" height="14.38" fill="#ffe000"/><rect x="509.93" y="551.28" width="14.38" height="14.38" fill="#d8f400"/><rect x="523.72" y="551.28" width="14.38" height="14.38" fill="#c0ec00"/><rect x="537.50" y="551.28" width="14.38" height="14.38" fill="#ff7800"/><rect x="551.28" y="551.28" width="14.38" height="14.38" fill="#000a80"/><rect x="565.06" y="551.28" width="41.95" height="14.38" fill="#000099"/><rect x="606.41" y="551.28" width="14.38" height="14.38" fill="#60a000"/><rect x="620.19" y="551.28" width="14.38" height="14.38" fill="#f8ff00"/><rect x="633.97" y="551.28" width="41.95" height="14.38" fill="#b8e800"/><rect x="675.32" y="551.28" width="28.16" height="14.38" fill="#b8e800"/><rect x="702.88" y="551.28" width="28.16" height="14.38" fill="#d8f400"/><rect x="730.45" y="551.28" width="28.16" height="14.38" fill="#c8f000"/><rect x="758.01" y="551.28" width="14.38" height="14.38" fill="#c8f000"/><rect x="771.79" y="551.28" width="14.38" height="14.38" fill="#e0f400"/><rect x="785.57" y="551.28" width="28.16" height="14.38" fill="#ffa800"/><rect x="813.14" y="551.28" width="97.07" height="14.38" fill="#ff3000"/><rect x="0.00" y="565.06" width="55.73" height="41.95" fill="#c8f000"/><rect x="55.13" y="565.06" width="28.16" height="41.95" fill="#c0ee00"/><rect x="82.69" y="565.06" width="110.86" height="41.95" fill="#c0ec00"/><rect x="192.95" y="565.06" width="83.29" height="41.95" fill="#b8e800"/><rect x="275.64" y="565.06" width="69.51" height="41.95" fill="#ffb800"/><rect x="344.55" y="565.06" width="83.29" height="41.95" fill="#ffbc00"/><rect x="427.24" y="565.06" width="83.29" height="41.95" fill="#ffcc00"/><rect x="509.93" y="565.06" width="14.38" height="41.95" fill="#e8f800"/><rect x="523.72" y="565.06" width="14.38" height="41.95" fill="#c8f000"/><rect x="537.50" y="565.06" width="14.38" height="41.95" fill="#ff5000"/><rect x="551.28" y="565.06" width="14.38" height="41.95" fill="#000099"/><rect x="565.06" y="565.06" width="41.95" height="41.95" fill="#000099"/><rect x="606.41" y="565.06" width="14.38" height="41.95" fill="#4a9818"/><rect x="620.19" y="565.06" width="14.38" height="41.95" fill="#e0f800"/><rect x="633.97" y="565.06" width="41.95" height="41.95" fill="#98d000"/><rect x="675.32" y="565.06" width="28.16" height="41.95" fill="#98d000"/><rect x="702.88" y="565.06" width="28.16" height="41.95" fill="#c0f000"/><rect x="730.45" y="565.06" width="28.16" height="41.95" fill="#c8f000"/><rect x="758.01" y="565.06" width="14.38" height="41.95" fill="#c8f000"/><rect x="771.79" y="565.06" width="14.38" height="41.95" fill="#c8f000"/><rect x="785.57" y="565.06" width="28.16" height="41.95" fill="#ffa800"/><rect x="813.14" y="565.06" width="97.07" height="41.95" fill="#ff1800"/><rect x="0.00" y="606.41" width="55.73" height="14.38" fill="#ffcc00"/><rect x="55.13" y="606.41" width="28.16" height="14.38" fill="#ffcc00"/><rect x="82.69" y="606.41" width="110.86" height="14.38" fill="#ffe600"/><rect x="192.95" y="606.41" width="83.29" height="14.38" fill="#ffe600"/><rect x="275.64" y="606.41" width="69.51" height="14.38" fill="#ffe600"/><rect x="344.55" y="606.41" width="83.29" height="14.38" fill="#ffe600"/><rect x="427.24" y="606.41" width="83.29" height="14.38" fill="#fff000"/><rect x="509.93" y="606.41" width="14.38" height="14.38" fill="#b8e800"/><rect x="523.72" y="606.41" width="14.38" height="14.38" fill="#b0e000"/><rect x="537.50" y="606.41" width="14.38" height="14.38" fill="#ffa000"/><rect x="551.28" y="606.41" width="14.38" height="14.38" fill="#60a000"/><rect x="565.06" y="606.41" width="41.95" height="14.38" fill="#4a9818"/><rect x="606.41" y="606.41" width="14.38" height="14.38" fill="#000099"/><rect x="620.19" y="606.41" width="14.38" height="14.38" fill="#90c800"/><rect x="633.97" y="606.41" width="41.95" height="14.38" fill="#3a8820"/><rect x="675.32" y="606.41" width="28.16" height="14.38" fill="#3a8820"/><rect x="702.88" y="606.41" width="28.16" height="14.38" fill="#80b800"/><rect x="730.45" y="606.41" width="28.16" height="14.38" fill="#6aa800"/><rect x="758.01" y="606.41" width="14.38" height="14.38" fill="#70a800"/><rect x="771.79" y="606.41" width="14.38" height="14.38" fill="#80b800"/><rect x="785.57" y="606.41" width="28.16" height="14.38" fill="#fff000"/><rect x="813.14" y="606.41" width="97.07" height="14.38" fill="#ff8800"/><rect x="0.00" y="620.19" width="55.73" height="14.38" fill="#f00000"/><rect x="55.13" y="620.19" width="28.16" height="14.38" fill="#f00000"/><rect x="82.69" y="620.19" width="110.86" height="14.38" fill="#ff2000"/><rect x="192.95" y="620.19" width="83.29" height="14.38" fill="#ff2000"/><rect x="275.64" y="620.19" width="69.51" height="14.38" fill="#d80000"/><rect x="344.55" y="620.19" width="83.29" height="14.38" fill="#dd0000"/><rect x="427.24" y="620.19" width="83.29" height="14.38" fill="#e00000"/><rect x="509.93" y="620.19" width="14.38" height="14.38" fill="#ff9000"/><rect x="523.72" y="620.19" width="14.38" height="14.38" fill="#ffa800"/><rect x="537.50" y="620.19" width="14.38" height="14.38" fill="#a00000"/><rect x="551.28" y="620.19" width="14.38" height="14.38" fill="#f8ff00"/><rect x="565.06" y="620.19" width="41.95" height="14.38" fill="#e0f800"/><rect x="606.41" y="620.19" width="14.38" height="14.38" fill="#90c800"/><rect x="620.19" y="620.19" width="14.38" height="14.38" fill="#000099"/><rect x="633.97" y="620.19" width="41.95" height="14.38" fill="#4a9818"/><rect x="675.32" y="620.19" width="28.16" height="14.38" fill="#4a9818"/><rect x="702.88" y="620.19" width="28.16" height="14.38" fill="#b8e800"/><rect x="730.45" y="620.19" width="28.16" height="14.38" fill="#c8f000"/><rect x="758.01" y="620.19" width="14.38" height="14.38" fill="#c8f000"/><rect x="771.79" y="620.19" width="14.38" height="14.38" fill="#c8f000"/><rect x="785.57" y="620.19" width="28.16" height="14.38" fill="#fff000"/><rect x="813.14" y="620.19" width="97.07" height="14.38" fill="#ff2800"/><rect x="0.00" y="633.97" width="55.73" height="41.95" fill="#ff5000"/><rect x="55.13" y="633.97" width="28.16" height="41.95" fill="#ff7400"/><rect x="82.69" y="633.97" width="110.86" height="41.95" fill="#ff7800"/><rect x="192.95" y="633.97" width="83.29" height="41.95" fill="#ff8400"/><rect x="275.64" y="633.97" width="69.51" height="41.95" fill="#ff3c00"/><rect x="344.55" y="633.97" width="83.29" height="41.95" fill="#ff4800"/><rect x="427.24" y="633.97" width="83.29" height="41.95" fill="#ff5000"/><rect x="509.93" y="633.97" width="14.38" height="41.95" fill="#ffe000"/><rect x="523.72" y="633.97" width="14.38" height="41.95" fill="#ffe000"/><rect x="537.50" y="633.97" width="14.38" height="41.95" fill="#d00000"/><rect x="551.28" y="633.97" width="14.38" height="41.95" fill="#b8e800"/><rect x="565.06" y="633.97" width="41.95" height="41.95" fill="#98d000"/><rect x="606.41" y="633.97" width="14.38" height="41.95" fill="#3a8820"/><rect x="620.19" y="633.97" width="14.38" height="41.95" fill="#4a9818"/><rect x="633.97" y="633.97" width="41.95" height="41.95" fill="#000099"/><rect x="675.32" y="633.97" width="28.16" height="41.95" fill="#000099"/><rect x="702.88" y="633.97" width="28.16" height="41.95" fill="#0058c0"/><rect x="730.45" y="633.97" width="28.16" height="41.95" fill="#006888"/><rect x="758.01" y="633.97" width="14.38" height="41.95" fill="#006888"/><rect x="771.79" y="633.97" width="14.38" height="41.95" fill="#0a7050"/><rect x="785.57" y="633.97" width="28.16" height="41.95" fill="#ff8800"/><rect x="813.14" y="633.97" width="97.07" height="41.95" fill="#d00000"/><rect x="0.00" y="675.32" width="55.73" height="28.16" fill="#ff6000"/><rect x="55.13" y="675.32" width="28.16" height="28.16" fill="#ff7000"/><rect x="82.69" y="675.32" width="110.86" height="28.16" fill="#ff8800"/><rect x="192.95" y="675.32" width="83.29" height="28.16" fill="#ff8800"/><rect x="275.64" y="675.32" width="69.51" height="28.16" fill="#ff4800"/><rect x="344.55" y="675.32" width="83.29" height="28.16" fill="#ff5000"/><rect x="427.24" y="675.32" width="83.29" height="28.16" fill="#ff6000"/><rect x="509.93" y="675.32" width="14.38" height="28.16" fill="#ffe000"/><rect x="523.72" y="675.32" width="14.38" height="28.16" fill="#ffe000"/><rect x="537.50" y="675.32" width="14.38" height="28.16" fill="#d00000"/><rect x="551.28" y="675.32" width="14.38" height="28.16" fill="#b8e800"/><rect x="565.06" y="675.32" width="41.95" height="28.16" fill="#98d000"/><rect x="606.41" y="675.32" width="14.38" height="28.16" fill="#3a8820"/><rect x="620.19" y="675.32" width="14.38" height="28.16" fill="#4a9818"/><rect x="633.97" y="675.32" width="41.95" height="28.16" fill="#000099"/><rect x="675.32" y="675.32" width="28.16" height="28.16" fill="#000099"/><rect x="702.88" y="675.32" width="28.16" height="28.16" fill="#0058c0"/><rect x="730.45" y="675.32" width="28.16" height="28.16" fill="#006898"/><rect x="758.01" y="675.32" width="14.38" height="28.16" fill="#006080"/><rect x="771.79" y="675.32" width="14.38" height="28.16" fill="#0a7050"/><rect x="785.57" y="675.32" width="28.16" height="28.16" fill="#ff8800"/><rect x="813.14" y="675.32" width="97.07" height="28.16" fill="#d00000"/><rect x="0.00" y="702.88" width="55.73" height="28.16" fill="#fc0000"/><rect x="55.13" y="702.88" width="28.16" height="28.16" fill="#ff2000"/><rect x="82.69" y="702.88" width="110.86" height="28.16" fill="#ff2800"/><rect x="192.95" y="702.88" width="83.29" height="28.16" fill="#ff2800"/><rect x="275.64" y="702.88" width="69.51" height="28.16" fill="#ff6000"/><rect x="344.55" y="702.88" width="83.29" height="28.16" fill="#ff6000"/><rect x="427.24" y="702.88" width="83.29" height="28.16" fill="#ff7000"/><rect x="509.93" y="702.88" width="14.38" height="28.16" fill="#ffe000"/><rect x="523.72" y="702.88" width="14.38" height="28.16" fill="#ffd800"/><rect x="537.50" y="702.88" width="14.38" height="28.16" fill="#c00000"/><rect x="551.28" y="702.88" width="14.38" height="28.16" fill="#d8f400"/><rect x="565.06" y="702.88" width="41.95" height="28.16" fill="#c0f000"/><rect x="606.41" y="702.88" width="14.38" height="28.16" fill="#80b800"/><rect x="620.19" y="702.88" width="14.38" height="28.16" fill="#b8e800"/><rect x="633.97" y="702.88" width="41.95" height="28.16" fill="#0058c0"/><rect x="675.32" y="702.88" width="28.16" height="28.16" fill="#0058c0"/><rect x="702.88" y="702.88" width="28.16" height="28.16" fill="#000099"/><rect x="730.45" y="702.88" width="28.16" height="28.16" fill="#001aa8"/><rect x="758.01" y="702.88" width="14.38" height="28.16" fill="#001aa8"/><rect x="771.79" y="702.88" width="14.38" height="28.16" fill="#0030b8"/><rect x="785.57" y="702.88" width="28.16" height="28.16" fill="#ff1800"/><rect x="813.14" y="702.88" width="97.07" height="28.16" fill="#900000"/><rect x="0.00" y="730.45" width="55.73" height="28.16" fill="#ff2800"/><rect x="55.13" y="730.45" width="28.16" height="28.16" fill="#ff4800"/><rect x="82.69" y="730.45" width="110.86" height="28.16" fill="#ff5000"/><rect x="192.95" y="730.45" width="83.29" height="28.16" fill="#ff5000"/><rect x="275.64" y="730.45" width="69.51" height="28.16" fill="#ff9800"/><rect x="344.55" y="730.45" width="83.29" height="28.16" fill="#ffa000"/><rect x="427.24" y="730.45" width="83.29" height="28.16" fill="#ffa000"/><rect x="509.93" y="730.45" width="14.38" height="28.16" fill="#ffff00"/><rect x="523.72" y="730.45" width="14.38" height="28.16" fill="#fff000"/><rect x="537.50" y="730.45" width="14.38" height="28.16" fill="#e00000"/><rect x="551.28" y="730.45" width="14.38" height="28.16" fill="#c8f000"/><rect x="565.06" y="730.45" width="41.95" height="28.16" fill="#c8f000"/><rect x="606.41" y="730.45" width="14.38" height="28.16" fill="#6aa800"/><rect x="620.19" y="730.45" width="14.38" height="28.16" fill="#c8f000"/><rect x="633.97" y="730.45" width="41.95" height="28.16" fill="#006888"/><rect x="675.32" y="730.45" width="28.16" height="28.16" fill="#006898"/><rect x="702.88" y="730.45" width="28.16" height="28.16" fill="#001aa8"/><rect x="730.45" y="730.45" width="28.16" height="28.16" fill="#000099"/><rect x="758.01" y="730.45" width="14.38" height="28.16" fill="#000099"/><rect x="771.79" y="730.45" width="14.38" height="28.16" fill="#000088"/><rect x="785.57" y="730.45" width="28.16" height="28.16" fill="#ff1800"/><rect x="813.14" y="730.45" width="97.07" height="28.16" fill="#a00000"/><rect x="0.00" y="758.01" width="55.73" height="14.38" fill="#ff2800"/><rect x="55.13" y="758.01" width="28.16" height="14.38" fill="#ff4800"/><rect x="82.69" y="758.01" width="110.86" height="14.38" fill="#ff5000"/><rect x="192.95" y="758.01" width="83.29" height="14.38" fill="#ff5000"/><rect x="275.64" y="758.01" width="69.51" height="14.38" fill="#ff9800"/><rect x="344.55" y="758.01" width="83.29" height="14.38" fill="#ffa000"/><rect x="427.24" y="758.01" width="83.29" height="14.38" fill="#ffa000"/><rect x="509.93" y="758.01" width="14.38" height="14.38" fill="#ffff00"/><rect x="523.72" y="758.01" width="14.38" height="14.38" fill="#fff000"/><rect x="537.50" y="758.01" width="14.38" height="14.38" fill="#e00000"/><rect x="551.28" y="758.01" width="14.38" height="14.38" fill="#c8f000"/><rect x="565.06" y="758.01" width="41.95" height="14.38" fill="#c8f000"/><rect x="606.41" y="758.01" width="14.38" height="14.38" fill="#70a800"/><rect x="620.19" y="758.01" width="14.38" height="14.38" fill="#c8f000"/><rect x="633.97" y="758.01" width="41.95" height="14.38" fill="#006888"/><rect x="675.32" y="758.01" width="28.16" height="14.38" fill="#006080"/><rect x="702.88" y="758.01" width="28.16" height="14.38" fill="#001aa8"/><rect x="730.45" y="758.01" width="28.16" height="14.38" fill="#000099"/><rect x="758.01" y="758.01" width="14.38" height="14.38" fill="#000099"/><rect x="771.79" y="758.01" width="14.38" height="14.38" fill="#000088"/><rect x="785.57" y="758.01" width="28.16" height="14.38" fill="#ff1800"/><rect x="813.14" y="758.01" width="97.07" height="14.38" fill="#a00000"/><rect x="0.00" y="771.79" width="55.73" height="14.38" fill="#ff1000"/><rect x="55.13" y="771.79" width="28.16" height="14.38" fill="#ff2000"/><rect x="82.69" y="771.79" width="110.86" height="14.38" fill="#ff2000"/><rect x="192.95" y="771.79" width="83.29" height="14.38" fill="#ff2000"/><rect x="275.64" y="771.79" width="69.51" height="14.38" fill="#ff9800"/><rect x="344.55" y="771.79" width="83.29" height="14.38" fill="#ffa000"/><rect x="427.24" y="771.79" width="83.29" height="14.38" fill="#ffa000"/><rect x="509.93" y="771.79" width="14.38" height="14.38" fill="#fff000"/><rect x="523.72" y="771.79" width="14.38" height="14.38" fill="#ffe800"/><rect x="537.50" y="771.79" width="14.38" height="14.38" fill="#e00000"/><rect x="551.28" y="771.79" width="14.38" height="14.38" fill="#e0f400"/><rect x="565.06" y="771.79" width="41.95" height="14.38" fill="#c8f000"/><rect x="606.41" y="771.79" width="14.38" height="14.38" fill="#80b800"/><rect x="620.19" y="771.79" width="14.38" height="14.38" fill="#c8f000"/><rect x="633.97" y="771.79" width="41.95" height="14.38" fill="#0a7050"/><rect x="675.32" y="771.79" width="28.16" height="14.38" fill="#0a7050"/><rect x="702.88" y="771.79" width="28.16" height="14.38" fill="#0030b8"/><rect x="730.45" y="771.79" width="28.16" height="14.38" fill="#000088"/><rect x="758.01" y="771.79" width="14.38" height="14.38" fill="#000088"/><rect x="771.79" y="771.79" width="14.38" height="14.38" fill="#000099"/><rect x="785.57" y="771.79" width="28.16" height="14.38" fill="#ff0800"/><rect x="813.14" y="771.79" width="97.07" height="14.38" fill="#900000"/><rect x="0.00" y="785.57" width="55.73" height="28.16" fill="#f40000"/><rect x="55.13" y="785.57" width="28.16" height="28.16" fill="#dd0000"/><rect x="82.69" y="785.57" width="110.86" height="28.16" fill="#ff1000"/><rect x="192.95" y="785.57" width="83.29" height="28.16" fill="#ff1000"/><rect x="275.64" y="785.57" width="69.51" height="28.16" fill="#d40000"/><rect x="344.55" y="785.57" width="83.29" height="28.16" fill="#dd0000"/><rect x="427.24" y="785.57" width="83.29" height="28.16" fill="#e80000"/><rect x="509.93" y="785.57" width="14.38" height="28.16" fill="#ff7000"/><rect x="523.72" y="785.57" width="14.38" height="28.16" fill="#ffc800"/><rect x="537.50" y="785.57" width="14.38" height="28.16" fill="#ff6000"/><rect x="551.28" y="785.57" width="14.38" height="28.16" fill="#ffa800"/><rect x="565.06" y="785.57" width="41.95" height="28.16" fill="#ffa800"/><rect x="606.41" y="785.57" width="14.38" height="28.16" fill="#fff000"/><rect x="620.19" y="785.57" width="14.38" height="28.16" fill="#fff000"/><rect x="633.97" y="785.57" width="41.95" height="28.16" fill="#ff8800"/><rect x="675.32" y="785.57" width="28.16" height="28.16" fill="#ff8800"/><rect x="702.88" y="785.57" width="28.16" height="28.16" fill="#ff1800"/><rect x="730.45" y="785.57" width="28.16" height="28.16" fill="#ff1800"/><rect x="758.01" y="785.57" width="14.38" height="28.16" fill="#ff1800"/><rect x="771.79" y="785.57" width="14.38" height="28.16" fill="#ff0800"/><rect x="785.57" y="785.57" width="28.16" height="28.16" fill="#000099"/><rect x="813.14" y="785.57" width="97.07" height="28.16" fill="#68a000"/><rect x="0.00" y="813.14" width="55.73" height="97.07" fill="#f40000"/><rect x="55.13" y="813.14" width="28.16" height="97.07" fill="#dd0000"/><rect x="82.69" y="813.14" width="110.86" height="97.07" fill="#f80000"/><rect x="192.95" y="813.14" width="83.29" height="97.07" fill="#f80000"/><rect x="275.64" y="813.14" width="69.51" height="97.07" fill="#e80000"/><rect x="344.55" y="813.14" width="83.29" height="97.07" fill="#e80000"/><rect x="427.24" y="813.14" width="83.29" height="97.07" fill="#ff0000"/><rect x="509.93" y="813.14" width="14.38" height="97.07" fill="#ff6800"/><rect x="523.72" y="813.14" width="14.38" height="97.07" fill="#ffc800"/><rect x="537.50" y="813.14" width="14.38" height="97.07" fill="#ffcc00"/><rect x="551.28" y="813.14" width="14.38" height="97.07" fill="#ff3000"/><rect x="565.06" y="813.14" width="41.95" height="97.07" fill="#ff1800"/><rect x="606.41" y="813.14" width="14.38" height="97.07" fill="#ff8800"/><rect x="620.19" y="813.14" width="14.38" height="97.07" fill="#ff2800"/><rect x="633.97" y="813.14" width="41.95" height="97.07" fill="#d00000"/><rect x="675.32" y="813.14" width="28.16" height="97.07" fill="#d00000"/><rect x="702.88" y="813.14" width="28.16" height="97.07" fill="#900000"/><rect x="730.45" y="813.14" width="28.16" height="97.07" fill="#a00000"/><rect x="758.01" y="813.14" width="14.38" height="97.07" fill="#a00000"/><rect x="771.79" y="813.14" width="14.38" height="97.07" fill="#900000"/><rect x="785.57" y="813.14" width="28.16" height="97.07" fill="#68a000"/><rect x="813.14" y="813.14" width="97.07" height="97.07" fill="#000099"/></svg><div style="position:absolute;left:1020px;top:428px;width:221px;height:221px;border:2px solid #000;box-sizing:border-box"></div><svg style="position:absolute;left:1024px;top:432px" width="214" height="214" shape-rendering="crispEdges"><rect x="0.00" y="0.00" width="27.25" height="27.25" fill="#000099"/><rect x="26.75" y="0.00" width="27.25" height="27.25" fill="#0060a0"/><rect x="53.50" y="0.00" width="27.25" height="27.25" fill="#ff1000"/><rect x="80.25" y="0.00" width="27.25" height="27.25" fill="#e00000"/><rect x="107.00" y="0.00" width="27.25" height="27.25" fill="#e80000"/><rect x="133.75" y="0.00" width="27.25" height="27.25" fill="#b00000"/><rect x="160.50" y="0.00" width="27.25" height="27.25" fill="#900000"/><rect x="187.25" y="0.00" width="27.25" height="27.25" fill="#b00000"/><rect x="0.00" y="26.75" width="27.25" height="27.25" fill="#0060a0"/><rect x="26.75" y="26.75" width="27.25" height="27.25" fill="#000099"/><rect x="53.50" y="26.75" width="27.25" height="27.25" fill="#ff5000"/><rect x="80.25" y="26.75" width="27.25" height="27.25" fill="#f00000"/><rect x="107.00" y="26.75" width="27.25" height="27.25" fill="#f00000"/><rect x="133.75" y="26.75" width="27.25" height="27.25" fill="#b00000"/><rect x="160.50" y="26.75" width="27.25" height="27.25" fill="#900000"/><rect x="187.25" y="26.75" width="27.25" height="27.25" fill="#b00000"/><rect x="0.00" y="53.50" width="27.25" height="27.25" fill="#ff1000"/><rect x="26.75" y="53.50" width="27.25" height="27.25" fill="#ff5000"/><rect x="53.50" y="53.50" width="27.25" height="27.25" fill="#000099"/><rect x="80.25" y="53.50" width="27.25" height="27.25" fill="#107050"/><rect x="107.00" y="53.50" width="27.25" height="27.25" fill="#f00000"/><rect x="133.75" y="53.50" width="27.25" height="27.25" fill="#ff6000"/><rect x="160.50" y="53.50" width="27.25" height="27.25" fill="#900000"/><rect x="187.25" y="53.50" width="27.25" height="27.25" fill="#e00000"/><rect x="0.00" y="80.25" width="27.25" height="27.25" fill="#e00000"/><rect x="26.75" y="80.25" width="27.25" height="27.25" fill="#f00000"/><rect x="53.50" y="80.25" width="27.25" height="27.25" fill="#107050"/><rect x="80.25" y="80.25" width="27.25" height="27.25" fill="#000099"/><rect x="107.00" y="80.25" width="27.25" height="27.25" fill="#ff5500"/><rect x="133.75" y="80.25" width="27.25" height="27.25" fill="#ffc800"/><rect x="160.50" y="80.25" width="27.25" height="27.25" fill="#900000"/><rect x="187.25" y="80.25" width="27.25" height="27.25" fill="#d00000"/><rect x="0.00" y="107.00" width="27.25" height="27.25" fill="#e00000"/><rect x="26.75" y="107.00" width="27.25" height="27.25" fill="#f00000"/><rect x="53.50" y="107.00" width="27.25" height="27.25" fill="#f00000"/><rect x="80.25" y="107.00" width="27.25" height="27.25" fill="#ff6000"/><rect x="107.00" y="107.00" width="27.25" height="27.25" fill="#000099"/><rect x="133.75" y="107.00" width="27.25" height="27.25" fill="#c0e800"/><rect x="160.50" y="107.00" width="27.25" height="27.25" fill="#f00000"/><rect x="187.25" y="107.00" width="27.25" height="27.25" fill="#b00000"/><rect x="0.00" y="133.75" width="27.25" height="27.25" fill="#a00000"/><rect x="26.75" y="133.75" width="27.25" height="27.25" fill="#b00000"/><rect x="53.50" y="133.75" width="27.25" height="27.25" fill="#ff6000"/><rect x="80.25" y="133.75" width="27.25" height="27.25" fill="#ffc800"/><rect x="107.00" y="133.75" width="27.25" height="27.25" fill="#c0e800"/><rect x="133.75" y="133.75" width="27.25" height="27.25" fill="#000099"/><rect x="160.50" y="133.75" width="27.25" height="27.25" fill="#f00000"/><rect x="187.25" y="133.75" width="27.25" height="27.25" fill="#b00000"/><rect x="0.00" y="160.50" width="27.25" height="27.25" fill="#900000"/><rect x="26.75" y="160.50" width="27.25" height="27.25" fill="#900000"/><rect x="53.50" y="160.50" width="27.25" height="27.25" fill="#900000"/><rect x="80.25" y="160.50" width="27.25" height="27.25" fill="#980000"/><rect x="107.00" y="160.50" width="27.25" height="27.25" fill="#f00000"/><rect x="133.75" y="160.50" width="27.25" height="27.25" fill="#f00000"/><rect x="160.50" y="160.50" width="27.25" height="27.25" fill="#000099"/><rect x="187.25" y="160.50" width="27.25" height="27.25" fill="#c0e800"/><rect x="0.00" y="187.25" width="27.25" height="27.25" fill="#a00000"/><rect x="26.75" y="187.25" width="27.25" height="27.25" fill="#a80000"/><rect x="53.50" y="187.25" width="27.25" height="27.25" fill="#e00000"/><rect x="80.25" y="187.25" width="27.25" height="27.25" fill="#d00000"/><rect x="107.00" y="187.25" width="27.25" height="27.25" fill="#b00000"/><rect x="133.75" y="187.25" width="27.25" height="27.25" fill="#b00000"/><rect x="160.50" y="187.25" width="27.25" height="27.25" fill="#c0e800"/><rect x="187.25" y="187.25" width="27.25" height="27.25" fill="#000099"/></svg><div style="position:absolute;left:1254.7px;top:432.6px;font-size:23px;line-height:23px;color:#000;font-weight:normal;letter-spacing:0.3px;white-space:pre;">BM</div><div style="position:absolute;left:1254.7px;top:460.1px;font-size:23px;line-height:23px;color:#000;font-weight:normal;letter-spacing:0.3px;white-space:pre;">TM</div><div style="position:absolute;left:1254.7px;top:488.2px;font-size:23px;line-height:23px;color:#000;font-weight:normal;letter-spacing:0.3px;white-space:pre;">BC</div><div style="position:absolute;left:1254.7px;top:515.8px;font-size:23px;line-height:23px;color:#000;font-weight:normal;letter-spacing:0.3px;white-space:pre;">TC</div><div style="position:absolute;left:1254.7px;top:543.9px;font-size:23px;line-height:23px;color:#000;font-weight:normal;letter-spacing:0.3px;white-space:pre;">TP</div><div style="position:absolute;left:1254.7px;top:571.4px;font-size:23px;line-height:23px;color:#000;font-weight:normal;letter-spacing:0.3px;white-space:pre;">BP</div><div style="position:absolute;left:1254.7px;top:599.0px;font-size:23px;line-height:23px;color:#000;font-weight:normal;letter-spacing:0.3px;white-space:pre;">BI</div><div style="position:absolute;left:1254.7px;top:626.7px;font-size:23px;line-height:23px;color:#000;font-weight:normal;letter-spacing:0.3px;white-space:pre;">TI</div><svg style="position:absolute;left:1290px;top:400px" width="120" height="250"><path d="M10.0 43.6 L29.2 43.6 M10.0 71.1 L29.2 71.1 M29.2 43.6 L29.2 71.1 M29.2 57.1 L92.2 57.1 M10.0 99.2 L33.3 99.2 M10.0 126.8 L33.3 126.8 M33.3 99.2 L33.3 126.8 M33.3 112.7 L82.0 112.7 M10.0 154.9 L48.4 154.9 M10.0 182.4 L48.4 182.4 M48.4 154.9 L48.4 182.4 M48.4 168.9 L82.0 168.9 M82.0 112.7 L82.0 168.9 M82.0 141.0 L92.2 141.0 M92.2 57.1 L92.2 141.0 M92.2 99.2 L100.0 99.2 M10.0 210.0 L49.0 210.0 M10.0 237.7 L49.0 237.7 M49.0 210.0 L49.0 237.7 M49.0 224.0 L100.0 224.0 M100.0 99.2 L100.0 224.0 " stroke="#000" stroke-width="2.6" fill="none" stroke-linecap="square"/></svg><svg style="position:absolute;left:1290px;top:400px" width="120" height="30"><path d="M10.0 20.0 L100.0 20.0 M10.1 11.0 L10.1 20.0 M23.6 11.0 L23.6 20.0 M40.0 11.0 L40.0 20.0 M54.0 11.0 L54.0 20.0 M69.7 11.0 L69.7 20.0 M84.3 11.0 L84.3 20.0 M100.0 11.0 L100.0 20.0 " stroke="#000" stroke-width="2" fill="none" stroke-linecap="square"/></svg><svg style="position:absolute;left:1280px;top:330px" width="130" height="80"><text x="31.4" y="70" transform="rotate(-90 31.4 70)" font-size="25" font-family="Liberation Sans" fill="#000" letter-spacing="1.5">0.0</text><text x="45.5" y="70" transform="rotate(-90 45.5 70)" font-size="25" font-family="Liberation Sans" fill="#000" letter-spacing="1.5">0.2</text><text x="61.5" y="70" transform="rotate(-90 61.5 70)" font-size="25" font-family="Liberation Sans" fill="#000" letter-spacing="1.5">0.4</text><text x="75.5" y="70" transform="rotate(-90 75.5 70)" font-size="25" font-family="Liberation Sans" fill="#000" letter-spacing="1.5">0.59</text><text x="91.5" y="70" transform="rotate(-90 91.5 70)" font-size="25" font-family="Liberation Sans" fill="#000" letter-spacing="1.5">0.79</text><text x="105.6" y="70" transform="rotate(-90 105.6 70)" font-size="25" font-family="Liberation Sans" fill="#000" letter-spacing="1.5">0.99</text><text x="121.3" y="70" transform="rotate(-90 121.3 70)" font-size="25" font-family="Liberation Sans" fill="#000" letter-spacing="1.5">1.19</text></svg><svg style="position:absolute;left:1020px;top:650px" width="224" height="125" shape-rendering="crispEdges"><rect x="0.00" y="99.65" width="28.26" height="22.35" fill="#1f70a8"/><rect x="0.00" y="77.80" width="28.26" height="22.35" fill="#a8846a"/><rect x="27.76" y="99.65" width="28.26" height="22.35" fill="#2070a8"/><rect x="27.76" y="77.80" width="28.26" height="22.35" fill="#b08870"/><rect x="55.52" y="99.65" width="28.26" height="22.35" fill="#d28a90"/><rect x="55.52" y="77.80" width="28.26" height="22.35" fill="#3a7068"/><rect x="83.28" y="99.65" width="28.26" height="22.35" fill="#d88098"/><rect x="83.28" y="77.80" width="28.26" height="22.35" fill="#3e7868"/><rect x="111.04" y="99.65" width="28.26" height="22.35" fill="#e45878"/><rect x="111.04" y="77.80" width="28.26" height="22.35" fill="#e05878"/><rect x="111.04" y="55.95" width="28.26" height="22.35" fill="#c06078"/><rect x="111.04" y="34.10" width="28.26" height="22.35" fill="#4a9488"/><rect x="111.04" y="12.25" width="28.26" height="22.35" fill="#4a9488"/><rect x="138.80" y="99.65" width="28.26" height="22.35" fill="#ec5494"/><rect x="138.80" y="77.80" width="28.26" height="22.35" fill="#ec5494"/><rect x="138.80" y="55.95" width="28.26" height="22.35" fill="#7a807a"/><rect x="138.80" y="34.10" width="28.26" height="22.35" fill="#4e9474"/><rect x="138.80" y="12.25" width="28.26" height="22.35" fill="#4e9474"/><rect x="166.56" y="99.65" width="28.26" height="22.35" fill="#845888"/><rect x="166.56" y="77.80" width="28.26" height="22.35" fill="#845888"/><rect x="166.56" y="55.95" width="28.26" height="22.35" fill="#807880"/><rect x="166.56" y="34.10" width="28.26" height="22.35" fill="#807880"/><rect x="166.56" y="12.25" width="28.26" height="22.35" fill="#70f080"/><rect x="194.32" y="99.65" width="28.26" height="22.35" fill="#b0f098"/><rect x="194.32" y="77.80" width="28.26" height="22.35" fill="#756878"/><rect x="194.32" y="55.95" width="28.26" height="22.35" fill="#756878"/><rect x="194.32" y="34.10" width="28.26" height="22.35" fill="#756878"/></svg><svg style="position:absolute;left:952px;top:788.3px" width="60" height="903.7" shape-rendering="crispEdges"><rect x="0" y="0.00" width="20" height="276.24" fill="#808080"/><rect x="0" y="275.64" width="20" height="234.89" fill="#ff00ff"/><rect x="0" y="509.93" width="20" height="28.16" fill="#00ffff"/><rect x="0" y="537.50" width="20" height="14.38" fill="#ffff00"/><rect x="0" y="551.28" width="20" height="55.73" fill="#808080"/><rect x="0" y="606.41" width="20" height="14.38" fill="#008000"/><rect x="0" y="620.19" width="20" height="14.38" fill="#ff0000"/><rect x="0" y="633.97" width="20" height="14.38" fill="#808080"/><rect x="0" y="647.75" width="20" height="28.16" fill="#008000"/><rect x="0" y="675.32" width="20" height="14.38" fill="#ff8000"/><rect x="0" y="689.10" width="20" height="97.07" fill="#0000ff"/><rect x="0" y="785.57" width="20" height="124.64" fill="#ff8000"/><rect x="34" y="0.00" width="20" height="55.73" fill="#2468b8"/><rect x="34" y="55.13" width="20" height="28.16" fill="#1e5aa8"/><rect x="34" y="82.69" width="20" height="193.55" fill="#1a6aa8"/><rect x="34" y="275.64" width="20" height="234.89" fill="#ec5494"/><rect x="34" y="509.93" width="20" height="14.38" fill="#c86878"/><rect x="34" y="523.72" width="20" height="14.38" fill="#b07888"/><rect x="34" y="537.50" width="20" height="14.38" fill="#ff88c0"/><rect x="34" y="551.28" width="20" height="14.38" fill="#3a7060"/><rect x="34" y="565.06" width="20" height="41.95" fill="#3a7858"/><rect x="34" y="606.41" width="20" height="14.38" fill="#808838"/><rect x="34" y="620.19" width="20" height="14.38" fill="#58b810"/><rect x="34" y="633.97" width="20" height="69.51" fill="#5a8018"/><rect x="34" y="702.88" width="20" height="28.16" fill="#787000"/><rect x="34" y="730.45" width="20" height="41.95" fill="#806810"/><rect x="34" y="771.79" width="20" height="14.38" fill="#885c00"/><rect x="34" y="785.57" width="20" height="28.16" fill="#88f868"/><rect x="34" y="813.14" width="20" height="97.07" fill="#b0f8a0"/></svg><div style="position:absolute;left:952px;top:784px;width:20px;height:5px;background:#808080"></div><div style="position:absolute;left:986px;top:784px;width:20px;height:5px;background:#2468b8"></div><div style="position:absolute;left:961px;top:755px;width:0;height:0"><div style="position:absolute;left:-40px;top:-12px;width:80px;height:24px;font-size:22px;line-height:24px;color:#0000ff;transform:rotate(-90deg);text-align:center;letter-spacing:0.5px">Order</div></div><div style="position:absolute;left:1020px;top:784px;width:222px;height:908px;border:2px solid #000;border-bottom:none;box-sizing:border-box"></div><svg style="position:absolute;left:1024px;top:788.3px" width="214" height="903.7" shape-rendering="crispEdges"><rect x="0.00" y="0.00" width="27.22" height="276.24" fill="#1f6fa8"/><rect x="0.00" y="275.64" width="27.22" height="276.24" fill="#a8846a"/><rect x="0.00" y="551.28" width="27.22" height="14.38" fill="#1f6fa8"/><rect x="0.00" y="565.06" width="27.22" height="345.15" fill="#a8846a"/><rect x="26.72" y="0.00" width="27.22" height="276.24" fill="#2070a8"/><rect x="26.72" y="275.64" width="27.22" height="290.02" fill="#b08870"/><rect x="26.72" y="565.06" width="27.22" height="41.95" fill="#2070a8"/><rect x="26.72" y="606.41" width="27.22" height="303.80" fill="#b08870"/><rect x="53.44" y="0.00" width="27.22" height="276.24" fill="#3a7068"/><rect x="53.44" y="275.64" width="27.22" height="276.24" fill="#d08a90"/><rect x="53.44" y="551.28" width="27.22" height="55.73" fill="#3a7068"/><rect x="53.44" y="606.41" width="27.22" height="14.38" fill="#d08a90"/><rect x="53.44" y="620.19" width="27.22" height="165.98" fill="#3a7068"/><rect x="53.44" y="785.57" width="27.22" height="124.64" fill="#d08a90"/><rect x="80.16" y="0.00" width="27.22" height="276.24" fill="#3d7868"/><rect x="80.16" y="275.64" width="27.22" height="276.24" fill="#d88098"/><rect x="80.16" y="551.28" width="27.22" height="262.46" fill="#3d7868"/><rect x="80.16" y="813.14" width="27.22" height="97.07" fill="#d88098"/><rect x="106.88" y="0.00" width="27.22" height="276.24" fill="#4a9488"/><rect x="106.88" y="275.64" width="27.22" height="152.20" fill="#e05878"/><rect x="106.88" y="427.24" width="27.22" height="97.07" fill="#c06078"/><rect x="106.88" y="523.72" width="27.22" height="14.38" fill="#4a9488"/><rect x="106.88" y="537.50" width="27.22" height="14.38" fill="#e05878"/><rect x="106.88" y="551.28" width="27.22" height="152.20" fill="#4a9488"/><rect x="106.88" y="702.88" width="27.22" height="69.51" fill="#c06078"/><rect x="106.88" y="771.79" width="27.22" height="14.38" fill="#e05878"/><rect x="106.88" y="785.57" width="27.22" height="124.64" fill="#4a9488"/><rect x="133.60" y="0.00" width="27.22" height="55.73" fill="#7a807a"/><rect x="133.60" y="55.13" width="27.22" height="221.11" fill="#4e9070"/><rect x="133.60" y="275.64" width="27.22" height="234.89" fill="#e85898"/><rect x="133.60" y="509.93" width="27.22" height="28.16" fill="#7a807a"/><rect x="133.60" y="537.50" width="27.22" height="14.38" fill="#e85898"/><rect x="133.60" y="551.28" width="27.22" height="179.77" fill="#4e9070"/><rect x="133.60" y="730.45" width="27.22" height="55.73" fill="#7a807a"/><rect x="133.60" y="785.57" width="27.22" height="124.64" fill="#4e9070"/><rect x="160.32" y="0.00" width="27.22" height="55.73" fill="#857880"/><rect x="160.32" y="55.13" width="27.22" height="28.16" fill="#855888"/><rect x="160.32" y="82.69" width="27.22" height="193.55" fill="#857880"/><rect x="160.32" y="275.64" width="27.22" height="276.24" fill="#855888"/><rect x="160.32" y="551.28" width="27.22" height="69.51" fill="#857880"/><rect x="160.32" y="620.19" width="27.22" height="14.38" fill="#70f080"/><rect x="160.32" y="633.97" width="27.22" height="152.20" fill="#857880"/><rect x="160.32" y="785.57" width="27.22" height="124.64" fill="#70f080"/><rect x="187.04" y="0.00" width="27.22" height="538.10" fill="#756878"/><rect x="187.04" y="537.50" width="27.22" height="14.38" fill="#b0f098"/><rect x="187.04" y="551.28" width="27.22" height="234.89" fill="#756878"/><rect x="187.04" y="785.57" width="27.22" height="124.64" fill="#b0f098"/></svg><div style="position:absolute;left:800px;top:783px;width:142px;height:909px;overflow:hidden"><div style="position:absolute;left:-60px;width:200px;text-align:right;top:-5.0px;font-size:13px;line-height:13px;color:#111;letter-spacing:0.3px;white-space:pre;transform:scaleX(0.84);transform-origin:100% 50%">Ocelot</div><div style="position:absolute;left:-60px;width:200px;text-align:right;top:8.9px;font-size:13px;line-height:13px;color:#111;letter-spacing:0.3px;white-space:pre;transform:scaleX(0.84);transform-origin:100% 50%">Cougar</div><div style="position:absolute;left:-60px;width:200px;text-align:right;top:22.9px;font-size:13px;line-height:13px;color:#111;letter-spacing:0.3px;white-space:pre;transform:scaleX(0.84);transform-origin:100% 50%">Lynx</div><div style="position:absolute;left:-60px;width:200px;text-align:right;top:36.8px;font-size:13px;line-height:13px;color:#111;letter-spacing:0.3px;white-space:pre;transform:scaleX(0.84);transform-origin:100% 50%">Jaguar</div><div style="position:absolute;left:-60px;width:200px;text-align:right;top:50.7px;font-size:13px;line-height:13px;color:#111;letter-spacing:0.3px;white-space:pre;transform:scaleX(0.84);transform-origin:100% 50%">Walrus</div><div style="position:absolute;left:-60px;width:200px;text-align:right;top:64.6px;font-size:13px;line-height:13px;color:#111;letter-spacing:0.3px;white-space:pre;transform:scaleX(0.84);transform-origin:100% 50%">Elephant.Seal</div><div style="position:absolute;left:-60px;width:200px;text-align:right;top:78.6px;font-size:13px;line-height:13px;color:#111;letter-spacing:0.3px;white-space:pre;transform:scaleX(0.84);transform-origin:100% 50%">Weasel</div><div style="position:absolute;left:-60px;width:200px;text-align:right;top:92.5px;font-size:13px;line-height:13px;color:#111;letter-spacing:0.3px;white-space:pre;transform:scaleX(0.84);transform-origin:100% 50%">Mink</div><div style="position:absolute;left:-60px;width:200px;text-align:right;top:106.4px;font-size:13px;line-height:13px;color:#111;letter-spacing:0.3px;white-space:pre;transform:scaleX(0.84);transform-origin:100% 50%">River.Otter</div><div style="position:absolute;left:-60px;width:200px;text-align:right;top:120.4px;font-size:13px;line-height:13px;color:#111;letter-spacing:0.3px;white-space:pre;transform:scaleX(0.84);transform-origin:100% 50%">Sea.Otter</div><div style="position:absolute;left:-60px;width:200px;text-align:right;top:134.3px;font-size:13px;line-height:13px;color:#111;letter-spacing:0.3px;white-space:pre;transform:scaleX(0.84);transform-origin:100% 50%">Grey.Seal</div><div style="position:absolute;left:-60px;width:200px;text-align:right;top:148.2px;font-size:13px;line-height:13px;color:#111;letter-spacing:0.3px;white-space:pre;transform:scaleX(0.84);transform-origin:100% 50%">Skunk</div><div style="position:absolute;left:-60px;width:200px;text-align:right;top:162.2px;font-size:13px;line-height:13px;color:#111;letter-spacing:0.3px;white-space:pre;transform:scaleX(0.84);transform-origin:100% 50%">Badger</div><div style="position:absolute;left:-60px;width:200px;text-align:right;top:176.1px;font-size:13px;line-height:13px;color:#111;letter-spacing:0.3px;white-space:pre;transform:scaleX(0.84);transform-origin:100% 50%">Ferrer</div><div style="position:absolute;left:-60px;width:200px;text-align:right;top:190.0px;font-size:13px;line-height:13px;color:#111;letter-spacing:0.3px;white-space:pre;transform:scaleX(0.84);transform-origin:100% 50%">Civet.Cat</div><div style="position:absolute;left:-60px;width:200px;text-align:right;top:203.9px;font-size:13px;line-height:13px;color:#111;letter-spacing:0.3px;white-space:pre;transform:scaleX(0.84);transform-origin:100% 50%">Fur.Seal</div><div style="position:absolute;left:-60px;width:200px;text-align:right;top:217.9px;font-size:13px;line-height:13px;color:#111;letter-spacing:0.3px;white-space:pre;transform:scaleX(0.84);transform-origin:100% 50%">Sea.Lion</div><div style="position:absolute;left:-60px;width:200px;text-align:right;top:231.8px;font-size:13px;line-height:13px;color:#111;letter-spacing:0.3px;white-space:pre;transform:scaleX(0.84);transform-origin:100% 50%">Wolverine</div><div style="position:absolute;left:-60px;width:200px;text-align:right;top:245.7px;font-size:13px;line-height:13px;color:#111;letter-spacing:0.3px;white-space:pre;transform:scaleX(0.84);transform-origin:100% 50%">Fisher</div><div style="position:absolute;left:-60px;width:200px;text-align:right;top:259.7px;font-size:13px;line-height:13px;color:#111;letter-spacing:0.3px;white-space:pre;transform:scaleX(0.84);transform-origin:100% 50%">Marten</div><div style="position:absolute;left:-60px;width:200px;text-align:right;top:273.6px;font-size:13px;line-height:13px;color:#111;letter-spacing:0.3px;white-space:pre;transform:scaleX(0.84);transform-origin:100% 50%">Field.Mouse</div><div style="position:absolute;left:-60px;width:200px;text-align:right;top:287.5px;font-size:13px;line-height:13px;color:#111;letter-spacing:0.3px;white-space:pre;transform:scaleX(0.84);transform-origin:100% 50%">Muskrat</div><div style="position:absolute;left:-60px;width:200px;text-align:right;top:301.5px;font-size:13px;line-height:13px;color:#111;letter-spacing:0.3px;white-space:pre;transform:scaleX(0.84);transform-origin:100% 50%">Pack.Rat</div><div style="position:absolute;left:-60px;width:200px;text-align:right;top:315.4px;font-size:13px;line-height:13px;color:#111;letter-spacing:0.3px;white-space:pre;transform:scaleX(0.84);transform-origin:100% 50%">House.Mouse</div><div style="position:absolute;left:-60px;width:200px;text-align:right;top:329.3px;font-size:13px;line-height:13px;color:#111;letter-spacing:0.3px;white-space:pre;transform:scaleX(0.84);transform-origin:100% 50%">Black.Rat</div><div style="position:absolute;left:-60px;width:200px;text-align:right;top:343.2px;font-size:13px;line-height:13px;color:#111;letter-spacing:0.3px;white-space:pre;transform:scaleX(0.84);transform-origin:100% 50%">Pocket.Gopher</div><div style="position:absolute;left:-60px;width:200px;text-align:right;top:357.2px;font-size:13px;line-height:13px;color:#111;letter-spacing:0.3px;white-space:pre;transform:scaleX(0.84);transform-origin:100% 50%">Fox.Squirrel</div><div style="position:absolute;left:-60px;width:200px;text-align:right;top:371.1px;font-size:13px;line-height:13px;color:#111;letter-spacing:0.3px;white-space:pre;transform:scaleX(0.84);transform-origin:100% 50%">Gray.Squirrel</div><div style="position:absolute;left:-60px;width:200px;text-align:right;top:385.0px;font-size:13px;line-height:13px;color:#111;letter-spacing:0.3px;white-space:pre;transform:scaleX(0.84);transform-origin:100% 50%">Kangaroo.Rat</div><div style="position:absolute;left:-60px;width:200px;text-align:right;top:399.0px;font-size:13px;line-height:13px;color:#111;letter-spacing:0.3px;white-space:pre;transform:scaleX(0.84);transform-origin:100% 50%">Guinea.Pig</div><div style="position:absolute;left:-60px;width:200px;text-align:right;top:412.9px;font-size:13px;line-height:13px;color:#111;letter-spacing:0.3px;white-space:pre;transform:scaleX(0.84);transform-origin:100% 50%">Porcupine</div><div style="position:absolute;left:-60px;width:200px;text-align:right;top:426.8px;font-size:13px;line-height:13px;color:#111;letter-spacing:0.3px;white-space:pre;transform:scaleX(0.84);transform-origin:100% 50%">Chipmunk</div><div style="position:absolute;left:-60px;width:200px;text-align:right;top:440.8px;font-size:13px;line-height:13px;color:#111;letter-spacing:0.3px;white-space:pre;transform:scaleX(0.84);transform-origin:100% 50%">Beaver</div><div style="position:absolute;left:-60px;width:200px;text-align:right;top:454.7px;font-size:13px;line-height:13px;color:#111;letter-spacing:0.3px;white-space:pre;transform:scaleX(0.84);transform-origin:100% 50%">Marmot</div><div style="position:absolute;left:-60px;width:200px;text-align:right;top:468.6px;font-size:13px;line-height:13px;color:#111;letter-spacing:0.3px;white-space:pre;transform:scaleX(0.84);transform-origin:100% 50%">Groundhog</div><div style="position:absolute;left:-60px;width:200px;text-align:right;top:482.5px;font-size:13px;line-height:13px;color:#111;letter-spacing:0.3px;white-space:pre;transform:scaleX(0.84);transform-origin:100% 50%">Prairie.Dog</div><div style="position:absolute;left:-60px;width:200px;text-align:right;top:496.5px;font-size:13px;line-height:13px;color:#111;letter-spacing:0.3px;white-space:pre;transform:scaleX(0.84);transform-origin:100% 50%">Ground.Squirrel</div><div style="position:absolute;left:-60px;width:200px;text-align:right;top:510.4px;font-size:13px;line-height:13px;color:#111;letter-spacing:0.3px;white-space:pre;transform:scaleX(0.84);transform-origin:100% 50%">Pika</div><div style="position:absolute;left:-60px;width:200px;text-align:right;top:524.3px;font-size:13px;line-height:13px;color:#111;letter-spacing:0.3px;white-space:pre;transform:scaleX(0.84);transform-origin:100% 50%">Snowshoe.Rabbit</div><div style="position:absolute;left:-60px;width:200px;text-align:right;top:538.3px;font-size:13px;line-height:13px;color:#111;letter-spacing:0.3px;white-space:pre;transform:scaleX(0.84);transform-origin:100% 50%">Armadillo</div><div style="position:absolute;left:-60px;width:200px;text-align:right;top:552.2px;font-size:13px;line-height:13px;color:#111;letter-spacing:0.3px;white-space:pre;transform:scaleX(0.84);transform-origin:100% 50%">Raccoon</div><div style="position:absolute;left:-60px;width:200px;text-align:right;top:566.1px;font-size:13px;line-height:13px;color:#111;letter-spacing:0.3px;white-space:pre;transform:scaleX(0.84);transform-origin:100% 50%">Wolf</div><div style="position:absolute;left:-60px;width:200px;text-align:right;top:580.1px;font-size:13px;line-height:13px;color:#111;letter-spacing:0.3px;white-space:pre;transform:scaleX(0.84);transform-origin:100% 50%">Fox</div><div style="position:absolute;left:-60px;width:200px;text-align:right;top:594.0px;font-size:13px;line-height:13px;color:#111;letter-spacing:0.3px;white-space:pre;transform:scaleX(0.84);transform-origin:100% 50%">Bear</div><div style="position:absolute;left:-60px;width:200px;text-align:right;top:607.9px;font-size:13px;line-height:13px;color:#111;letter-spacing:0.3px;white-space:pre;transform:scaleX(0.84);transform-origin:100% 50%">Common.Mole</div><div style="position:absolute;left:-60px;width:200px;text-align:right;top:621.8px;font-size:13px;line-height:13px;color:#111;letter-spacing:0.3px;white-space:pre;transform:scaleX(0.84);transform-origin:100% 50%">Opossum</div><div style="position:absolute;left:-60px;width:200px;text-align:right;top:635.8px;font-size:13px;line-height:13px;color:#111;letter-spacing:0.3px;white-space:pre;transform:scaleX(0.84);transform-origin:100% 50%">Coyote</div><div style="position:absolute;left:-60px;width:200px;text-align:right;top:649.7px;font-size:13px;line-height:13px;color:#111;letter-spacing:0.3px;white-space:pre;transform:scaleX(0.84);transform-origin:100% 50%">Hairy.Tail.Mole</div><div style="position:absolute;left:-60px;width:200px;text-align:right;top:663.6px;font-size:13px;line-height:13px;color:#111;letter-spacing:0.3px;white-space:pre;transform:scaleX(0.84);transform-origin:100% 50%">Star.Nose.Mole</div><div style="position:absolute;left:-60px;width:200px;text-align:right;top:677.6px;font-size:13px;line-height:13px;color:#111;letter-spacing:0.3px;white-space:pre;transform:scaleX(0.84);transform-origin:100% 50%">Peccary</div><div style="position:absolute;left:-60px;width:200px;text-align:right;top:691.5px;font-size:13px;line-height:13px;color:#111;letter-spacing:0.3px;white-space:pre;transform:scaleX(0.84);transform-origin:100% 50%">Brown.Bat</div><div style="position:absolute;left:-60px;width:200px;text-align:right;top:705.4px;font-size:13px;line-height:13px;color:#111;letter-spacing:0.3px;white-space:pre;transform:scaleX(0.84);transform-origin:100% 50%">Lump.Nose.Bat</div><div style="position:absolute;left:-60px;width:200px;text-align:right;top:719.4px;font-size:13px;line-height:13px;color:#111;letter-spacing:0.3px;white-space:pre;transform:scaleX(0.84);transform-origin:100% 50%">Silver.Hair.Bat</div><div style="position:absolute;left:-60px;width:200px;text-align:right;top:733.3px;font-size:13px;line-height:13px;color:#111;letter-spacing:0.3px;white-space:pre;transform:scaleX(0.84);transform-origin:100% 50%">Red.Bat</div><div style="position:absolute;left:-60px;width:200px;text-align:right;top:747.2px;font-size:13px;line-height:13px;color:#111;letter-spacing:0.3px;white-space:pre;transform:scaleX(0.84);transform-origin:100% 50%">Hoary.Bat</div><div style="position:absolute;left:-60px;width:200px;text-align:right;top:761.1px;font-size:13px;line-height:13px;color:#111;letter-spacing:0.3px;white-space:pre;transform:scaleX(0.84);transform-origin:100% 50%">Pigmy.Bat</div><div style="position:absolute;left:-60px;width:200px;text-align:right;top:775.1px;font-size:13px;line-height:13px;color:#111;letter-spacing:0.3px;white-space:pre;transform:scaleX(0.84);transform-origin:100% 50%">House.Bat</div><div style="position:absolute;left:-60px;width:200px;text-align:right;top:789.0px;font-size:13px;line-height:13px;color:#111;letter-spacing:0.3px;white-space:pre;transform:scaleX(0.84);transform-origin:100% 50%">Reindeer</div><div style="position:absolute;left:-60px;width:200px;text-align:right;top:802.9px;font-size:13px;line-height:13px;color:#111;letter-spacing:0.3px;white-space:pre;transform:scaleX(0.84);transform-origin:100% 50%">Elk</div><div style="position:absolute;left:-60px;width:200px;text-align:right;top:816.9px;font-size:13px;line-height:13px;color:#111;letter-spacing:0.3px;white-space:pre;transform:scaleX(0.84);transform-origin:100% 50%">Deer</div><div style="position:absolute;left:-60px;width:200px;text-align:right;top:830.8px;font-size:13px;line-height:13px;color:#111;letter-spacing:0.3px;white-space:pre;transform:scaleX(0.84);transform-origin:100% 50%">Moose</div><div style="position:absolute;left:-60px;width:200px;text-align:right;top:844.7px;font-size:13px;line-height:13px;color:#111;letter-spacing:0.3px;white-space:pre;transform:scaleX(0.84);transform-origin:100% 50%">Antelope</div><div style="position:absolute;left:-60px;width:200px;text-align:right;top:858.7px;font-size:13px;line-height:13px;color:#111;letter-spacing:0.3px;white-space:pre;transform:scaleX(0.84);transform-origin:100% 50%">Bison</div><div style="position:absolute;left:-60px;width:200px;text-align:right;top:872.6px;font-size:13px;line-height:13px;color:#111;letter-spacing:0.3px;white-space:pre;transform:scaleX(0.84);transform-origin:100% 50%">Mountain.Goat</div><div style="position:absolute;left:-60px;width:200px;text-align:right;top:886.5px;font-size:13px;line-height:13px;color:#111;letter-spacing:0.3px;white-space:pre;transform:scaleX(0.84);transform-origin:100% 50%">Muskox</div><div style="position:absolute;left:-60px;width:200px;text-align:right;top:900.4px;font-size:13px;line-height:13px;color:#111;letter-spacing:0.3px;white-space:pre;transform:scaleX(0.84);transform-origin:100% 50%">Mountain.Sheep</div></div><div style="position:absolute;left:2172px;top:780px;width:500px;height:912px;overflow:hidden"><svg style="position:absolute;left:0;top:0" width="500" height="930"><path d="M12.0 12.8 L37.0 12.8 M12.0 26.7 L37.0 26.7 M12.0 40.6 L37.0 40.6 M12.0 54.5 L37.0 54.5 M12.0 68.4 L37.0 68.4 M12.0 82.3 L37.0 82.3 M12.0 96.2 L37.0 96.2 M12.0 110.1 L37.0 110.1 M12.0 124.0 L37.0 124.0 M12.0 137.9 L37.0 137.9 M12.0 151.8 L37.0 151.8 M12.0 165.7 L37.0 165.7 M12.0 179.6 L37.0 179.6 M12.0 193.5 L37.0 193.5 M12.0 207.4 L37.0 207.4 M12.0 221.3 L37.0 221.3 M12.0 235.2 L37.0 235.2 M12.0 249.1 L37.0 249.1 M12.0 263.0 L37.0 263.0 M12.0 276.9 L37.0 276.9 M12.0 290.8 L37.0 290.8 M12.0 304.7 L37.0 304.7 M12.0 318.6 L37.0 318.6 M12.0 332.5 L37.0 332.5 M12.0 346.4 L37.0 346.4 M12.0 360.3 L37.0 360.3 M12.0 374.2 L37.0 374.2 M12.0 388.1 L37.0 388.1 M12.0 402.0 L37.0 402.0 M12.0 415.9 L37.0 415.9 M12.0 429.8 L37.0 429.8 M12.0 443.7 L37.0 443.7 M12.0 457.6 L37.0 457.6 M12.0 471.5 L37.0 471.5 M12.0 485.4 L37.0 485.4 M12.0 499.3 L37.0 499.3 M12.0 513.2 L37.0 513.2 M12.0 527.1 L37.0 527.1 M12.0 541.0 L37.0 541.0 M12.0 554.9 L37.0 554.9 M12.0 568.8 L37.0 568.8 M12.0 582.7 L37.0 582.7 M12.0 596.6 L37.0 596.6 M12.0 610.5 L37.0 610.5 M12.0 624.4 L37.0 624.4 M12.0 638.3 L37.0 638.3 M12.0 652.2 L37.0 652.2 M12.0 666.1 L37.0 666.1 M12.0 680.0 L37.0 680.0 M12.0 693.9 L37.0 693.9 M12.0 707.8 L37.0 707.8 M12.0 721.7 L37.0 721.7 M12.0 735.6 L37.0 735.6 M12.0 749.5 L37.0 749.5 M12.0 763.4 L37.0 763.4 M12.0 777.3 L37.0 777.3 M12.0 791.2 L37.0 791.2 M12.0 805.1 L37.0 805.1 M12.0 819.0 L37.0 819.0 M12.0 832.9 L37.0 832.9 M12.0 846.8 L37.0 846.8 M12.0 860.7 L37.0 860.7 M12.0 874.6 L37.0 874.6 M12.0 888.5 L37.0 888.5 M12.0 902.4 L37.0 902.4 M12.0 916.3 L37.0 916.3 M37.0 12.8 L37.0 54.5 M37.0 38.6 L66.0 38.6 M38.5 68.4 L38.5 82.3 M38.5 74.5 L66.0 74.5 M66.0 38.6 L66.0 74.5 M66.0 56.3 L68.6 56.3 M37.0 96.2 L37.0 276.9 M38.5 119.5 L38.5 235.7 M38.5 178.0 L68.6 178.0 M68.6 56.3 L68.6 178.0 M68.6 117.7 L357.9 117.7 M37.0 290.8 L37.0 346.4 M42.7 305.0 L42.7 415.5 M37.0 305.0 L42.7 305.0 M37.0 415.5 L42.7 415.5 M37.0 360.3 L37.0 513.2 M42.7 360.5 L57.3 360.5 M37.0 471.8 L57.3 471.8 M57.3 360.5 L57.3 471.8 M57.3 415.5 L154.0 415.5 M12.0 527.1 L106.2 527.1 M12.0 541.0 L106.2 541.0 M106.2 527.1 L106.2 541.0 M106.2 533.6 L154.0 533.6 M154.0 415.5 L154.0 533.6 M154.0 474.2 L197.9 474.2 M12.0 554.9 L197.9 554.9 M197.9 474.2 L197.9 554.9 M197.9 514.7 L358.0 514.7 M358.0 117.7 L358.0 514.7 M358.0 315.4 L371.0 315.4 M371.0 315.4 L371.0 640.6 M371.0 478.6 L449.7 478.6 M449.7 478.6 L449.7 829.9 M12.0 568.8 L61.7 568.8 M37.0 582.7 L37.0 610.5 M37.0 593.0 L61.7 593.0 M61.7 568.8 L61.7 593.0 M61.7 580.6 L165.9 580.6 M12.0 624.4 L165.9 624.4 M165.9 580.6 L165.9 624.4 M165.9 603.0 L219.0 603.0 M12.0 638.3 L197.9 638.3 M37.0 652.2 L37.0 707.8 M38.4 663.0 L38.4 700.0 M37.0 681.6 L118.6 681.6 M37.0 721.7 L37.0 735.6 M37.0 728.9 L70.1 728.9 M37.0 749.5 L37.0 777.3 M37.0 767.1 L55.5 767.1 M12.0 791.2 L55.5 791.2 M55.5 767.1 L55.5 791.2 M55.5 778.6 L70.1 778.6 M70.1 728.9 L70.1 778.6 M70.1 753.7 L118.6 753.7 M118.6 681.6 L118.6 753.7 M118.6 717.4 L197.9 717.4 M197.9 638.3 L197.9 717.4 M197.9 677.9 L219.0 677.9 M219.0 603.0 L219.0 677.9 M219.0 640.6 L371.0 640.6 M37.0 805.1 L37.0 819.0 M37.0 811.9 L174.3 811.9 M37.0 832.9 L37.0 920.0 M37.0 847.0 L174.3 847.0 M174.3 811.9 L174.3 847.0 M174.3 829.9 L449.7 829.9 " stroke="#000" stroke-width="2.8" fill="none" stroke-linecap="square"/></svg></div><div style="position:absolute;left:789px;top:1692px;width:2596px;height:8px;background:#f7f7f7"></div><div style="position:absolute;left:3354px;top:722px;width:24px;height:970px;background:#f7f7f7;border-left:1px solid #e6e6e6;box-sizing:border-box"></div><div style="position:absolute;left:3362px;top:722px;width:16px;height:86px;background:#c1c1c1;border-radius:0 0 8px 8px"></div><div style="position:absolute;left:2826px;top:332px;width:552px;height:390px;background:#f5f5f5;border-radius:18px 18px 0px 0px;box-shadow:0 6px 24px rgba(0,0,0,0.28), 0 0 0 1px rgba(0,0,0,0.12);overflow:hidden"></div><div style="position:absolute;left:2826px;top:332px;width:552px;height:44px;background:#f6f6f6;border-radius:18px 18px 0 0;border-bottom:1px solid #d8d8d8;box-sizing:border-box"></div><div style="position:absolute;left:2844px;top:341px;width:24px;height:24px;border-radius:50%;background:#e0e0e0;box-sizing:border-box;border:1px solid #cfcfcf"></div><div style="position:absolute;left:2884px;top:341px;width:24px;height:24px;border-radius:50%;background:#e0e0e0;box-sizing:border-box;border:1px solid #cfcfcf"></div><div style="position:absolute;left:2924px;top:341px;width:24px;height:24px;border-radius:50%;background:#e0e0e0;box-sizing:border-box;border:1px solid #cfcfcf"></div><div style="position:absolute;left:2973.0px;top:341.1px;font-size:27px;line-height:27px;color:#858585;font-weight:normal;letter-spacing:0.9px;white-space:pre;">mammals_cov.txt [66x8]</div><div style="position:absolute;left:2829px;top:380px;width:97px;height:299px;background:#fff;border:2px solid #b8b8b8;box-sizing:border-box"></div><div style="position:absolute;left:2833px;top:384px;width:89px;height:31px;background:linear-gradient(#fafafa,#e6e6e6);border-bottom:2px solid #b0b0b0;box-sizing:border-box"></div><div style="position:absolute;left:2876px;top:386px;width:2px;height:28px;background:#c8c8c8"></div><div style="position:absolute;left:2837.0px;top:387.7px;font-size:24px;line-height:24px;color:#000;font-weight:normal;letter-spacing:1.5px;white-space:pre;">...</div><div style="position:absolute;left:2882.0px;top:387.7px;font-size:24px;line-height:24px;color:#000;font-weight:normal;letter-spacing:1.5px;white-space:pre;">...</div><div style="position:absolute;left:2836.0px;top:421.2px;font-size:24px;line-height:24px;color:#000;font-weight:normal;letter-spacing:0.8px;white-space:pre;">...</div><div style="position:absolute;left:2881.0px;top:421.2px;font-size:24px;line-height:24px;color:#000;font-weight:normal;letter-spacing:0.8px;white-space:pre;">0</div><div style="position:absolute;left:2836.0px;top:453.1px;font-size:24px;line-height:24px;color:#000;font-weight:normal;letter-spacing:0.8px;white-space:pre;">...</div><div style="position:absolute;left:2881.0px;top:453.1px;font-size:24px;line-height:24px;color:#000;font-weight:normal;letter-spacing:0.8px;white-space:pre;">1</div><div style="position:absolute;left:2836.0px;top:485.0px;font-size:24px;line-height:24px;color:#000;font-weight:normal;letter-spacing:0.8px;white-space:pre;">...</div><div style="position:absolute;left:2881.0px;top:485.0px;font-size:24px;line-height:24px;color:#000;font-weight:normal;letter-spacing:0.8px;white-space:pre;">1</div><div style="position:absolute;left:2836.0px;top:517.0px;font-size:24px;line-height:24px;color:#000;font-weight:normal;letter-spacing:0.8px;white-space:pre;">S...</div><div style="position:absolute;left:2881.0px;top:517.0px;font-size:24px;line-height:24px;color:#000;font-weight:normal;letter-spacing:0.8px;white-space:pre;">1</div><div style="position:absolute;left:2836.0px;top:548.9px;font-size:24px;line-height:24px;color:#000;font-weight:normal;letter-spacing:0.8px;white-space:pre;">B...</div><div style="position:absolute;left:2881.0px;top:548.9px;font-size:24px;line-height:24px;color:#000;font-weight:normal;letter-spacing:0.8px;white-space:pre;">2</div><div style="position:absolute;left:2836.0px;top:580.8px;font-size:24px;line-height:24px;color:#000;font-weight:normal;letter-spacing:0.8px;white-space:pre;">S...</div><div style="position:absolute;left:2881.0px;top:580.8px;font-size:24px;line-height:24px;color:#000;font-weight:normal;letter-spacing:0.8px;white-space:pre;">2</div><div style="position:absolute;left:2836.0px;top:612.8px;font-size:24px;line-height:24px;color:#000;font-weight:normal;letter-spacing:0.8px;white-space:pre;">P...</div><div style="position:absolute;left:2881.0px;top:612.8px;font-size:24px;line-height:24px;color:#000;font-weight:normal;letter-spacing:0.8px;white-space:pre;">2</div><div style="position:absolute;left:2836.0px;top:644.7px;font-size:24px;line-height:24px;color:#000;font-weight:normal;letter-spacing:0.8px;white-space:pre;">...</div><div style="position:absolute;left:2881.0px;top:644.7px;font-size:24px;line-height:24px;color:#000;font-weight:normal;letter-spacing:0.8px;white-space:pre;">2</div><div style="position:absolute;left:2930px;top:380px;width:444px;height:299px;background:#fff;border:2px solid #b8b8b8;box-sizing:border-box"></div><div style="position:absolute;left:2934px;top:384px;width:406px;height:31px;background:linear-gradient(#fafafa,#e6e6e6);border-bottom:2px solid #b0b0b0;box-sizing:border-box"></div><div style="position:absolute;left:3082px;top:386px;width:2px;height:28px;background:#c8c8c8"></div><div style="position:absolute;left:3232px;top:386px;width:2px;height:28px;background:#c8c8c8"></div><div style="position:absolute;left:2940.0px;top:387.7px;font-size:24px;line-height:24px;color:#000;font-weight:normal;letter-spacing:1.0px;white-space:pre;">TI</div><div style="position:absolute;left:3090.0px;top:387.7px;font-size:24px;line-height:24px;color:#000;font-weight:normal;letter-spacing:1.0px;white-space:pre;">BI</div><div style="position:absolute;left:3240.0px;top:387.7px;font-size:24px;line-height:24px;color:#000;font-weight:normal;letter-spacing:1.0px;white-space:pre;">TC</div><div style="position:absolute;left:2937.0px;top:421.2px;font-size:24px;line-height:24px;color:#000;font-weight:normal;letter-spacing:1.2px;white-space:pre;">4.0</div><div style="position:absolute;left:3087.0px;top:421.2px;font-size:24px;line-height:24px;color:#000;font-weight:normal;letter-spacing:1.2px;white-space:pre;">5.0</div><div style="position:absolute;left:3237.0px;top:421.2px;font-size:24px;line-height:24px;color:#000;font-weight:normal;letter-spacing:1.2px;white-space:pre;">2.0</div><div style="position:absolute;left:2937.0px;top:453.1px;font-size:24px;line-height:24px;color:#000;font-weight:normal;letter-spacing:1.2px;white-space:pre;">4.0</div><div style="position:absolute;left:3087.0px;top:453.1px;font-size:24px;line-height:24px;color:#000;font-weight:normal;letter-spacing:1.2px;white-space:pre;">4.0</div><div style="position:absolute;left:3237.0px;top:453.1px;font-size:24px;line-height:24px;color:#000;font-weight:normal;letter-spacing:1.2px;white-space:pre;">2.0</div><div style="position:absolute;left:2937.0px;top:485.0px;font-size:24px;line-height:24px;color:#000;font-weight:normal;letter-spacing:1.2px;white-space:pre;">4.0</div><div style="position:absolute;left:3087.0px;top:485.0px;font-size:24px;line-height:24px;color:#000;font-weight:normal;letter-spacing:1.2px;white-space:pre;">3.0</div><div style="position:absolute;left:3237.0px;top:485.0px;font-size:24px;line-height:24px;color:#000;font-weight:normal;letter-spacing:1.2px;white-space:pre;">2.0</div><div style="position:absolute;left:2937.0px;top:517.0px;font-size:24px;line-height:24px;color:#000;font-weight:normal;letter-spacing:1.2px;white-space:pre;">4.0</div><div style="position:absolute;left:3087.0px;top:517.0px;font-size:24px;line-height:24px;color:#000;font-weight:normal;letter-spacing:1.2px;white-space:pre;">4.0</div><div style="position:absolute;left:3237.0px;top:517.0px;font-size:24px;line-height:24px;color:#000;font-weight:normal;letter-spacing:1.2px;white-space:pre;">2.0</div><div style="position:absolute;left:2937.0px;top:548.9px;font-size:24px;line-height:24px;color:#000;font-weight:normal;letter-spacing:1.2px;white-space:pre;">3.0</div><div style="position:absolute;left:3087.0px;top:548.9px;font-size:24px;line-height:24px;color:#000;font-weight:normal;letter-spacing:1.2px;white-space:pre;">4.0</div><div style="position:absolute;left:3237.0px;top:548.9px;font-size:24px;line-height:24px;color:#000;font-weight:normal;letter-spacing:1.2px;white-space:pre;">2.0</div><div style="position:absolute;left:2937.0px;top:580.8px;font-size:24px;line-height:24px;color:#000;font-weight:normal;letter-spacing:1.2px;white-space:pre;">3.0</div><div style="position:absolute;left:3087.0px;top:580.8px;font-size:24px;line-height:24px;color:#000;font-weight:normal;letter-spacing:1.2px;white-space:pre;">4.0</div><div style="position:absolute;left:3237.0px;top:580.8px;font-size:24px;line-height:24px;color:#000;font-weight:normal;letter-spacing:1.2px;white-space:pre;">2.0</div><div style="position:absolute;left:2937.0px;top:612.8px;font-size:24px;line-height:24px;color:#000;font-weight:normal;letter-spacing:1.2px;white-space:pre;">3.0</div><div style="position:absolute;left:3087.0px;top:612.8px;font-size:24px;line-height:24px;color:#000;font-weight:normal;letter-spacing:1.2px;white-space:pre;">4.0</div><div style="position:absolute;left:3237.0px;top:612.8px;font-size:24px;line-height:24px;color:#000;font-weight:normal;letter-spacing:1.2px;white-space:pre;">2.0</div><div style="position:absolute;left:3341px;top:418px;width:28px;height:229px;background:#f8f8f8;border-left:1px solid #e8e8e8;box-sizing:border-box"></div><div style="position:absolute;left:3348px;top:420px;width:16px;height:35px;border-radius:8px;background:#c4c4c4"></div><div style="position:absolute;left:2934px;top:647px;width:407px;height:29px;background:#f8f8f8;border-top:1px solid #e8e8e8;box-sizing:border-box"></div><div style="position:absolute;left:2936px;top:654px;width:132px;height:16px;border-radius:8px;background:#c4c4c4"></div><svg style="position:absolute;left:3354px;top:658px" width="20" height="20"><path d="M2 18 L18 2 M8 18 L18 8 M14 18 L18 14" stroke="#999" stroke-width="1.5"/></svg><div style="position:absolute;left:2786px;top:808px;width:600px;height:640px;background:#000;border-radius:18px;box-shadow:0 8px 28px rgba(0,0,0,0.35), 0 0 0 1px rgba(0,0,0,0.15);overflow:hidden"><div style="position:absolute;left:0;top:0;width:600px;height:55px;background:linear-gradient(#ededed,#dcdcdc);border-bottom:1px solid #bdbdbd;box-sizing:border-box"></div><div style="position:absolute;left:0;top:55px;width:600px;height:48px;background:#eeeeee"></div></div><div style="position:absolute;left:2802px;top:824px;width:24px;height:24px;border-radius:50%;background:#ee6b60;box-sizing:border-box;border:1px solid #d55a50"></div><div style="position:absolute;left:2841.5px;top:824px;width:24px;height:24px;border-radius:50%;background:#dadada;box-sizing:border-box;border:1px solid #c4c4c4"></div><div style="position:absolute;left:2881.5px;top:824px;width:24px;height:24px;border-radius:50%;background:#62c655;box-sizing:border-box;border:1px solid #4fae44"></div><div style="position:absolute;left:2086.0px;width:2000px;text-align:center;top:821.4px;font-size:27px;line-height:27px;color:#2a2a2a;font-weight:bold;letter-spacing:0.2px;white-space:pre;">Star Plot</div><div style="position:absolute;left:2795px;top:870px;width:2px;height:35px;background:#999"></div><div style="position:absolute;left:2801px;top:870px;width:2px;height:35px;background:#999"></div><svg style="position:absolute;left:2813px;top:870px" width="200" height="36"><circle cx="10" cy="10" r="8" fill="#0000c0"/><circle cx="26" cy="27" r="5.5" fill="#d00000"/><path d="M14 15 L23 24" stroke="#333" stroke-width="2"/><g transform="translate(38 0) scale(0.62 1)"><text x="0" y="32" font-size="36" font-weight="bold" font-family="Liberation Sans" fill="#4a78a8">S</text><text x="30" y="32" font-size="36" font-weight="bold" font-family="Liberation Sans" fill="#d06060">C</text></g><circle cx="97" cy="18" r="14" fill="none" stroke="#d01010" stroke-width="4"/><path d="M88 9 L106 27" stroke="#d01010" stroke-width="4"/><path d="M90 11 L104 11 M96 11 L96 30" stroke="#c09020" stroke-width="4" fill="none"/><ellipse cx="137" cy="26" rx="14" ry="5" fill="#f06020"/><rect x="130" y="8" width="14" height="14" fill="#e8e8f0"/><circle cx="137" cy="15" r="4" fill="#4080c0"/><path d="M166 10 L174 4 L174 8 L180 8 L180 14 L172 14 L172 18 Z" fill="#20a020"/><path d="M188 26 L180 32 L180 28 L172 28 L172 22 L182 22 L182 18 Z" fill="#20a020"/></svg><svg style="position:absolute;left:2786px;top:911px" width="600" height="537"><path d="M255.0 3.9 L537.4 142.4 M248.3 12.9 L171.8 151.4 M171.8 151.4 L78.8 384.7 M248.3 12.9 L135.9 311.9 M171.8 151.4 L383.2 246.7 M537.4 142.4 L383.2 246.7 M537.4 142.4 L496.9 448.1 M135.9 311.9 L496.9 448.1 M135.9 311.9 L78.8 384.7 M78.8 384.7 L322.5 467.0 M496.9 448.1 L338.2 471.5 M362.9 332.1 L336.0 458.0" stroke="#e8e8e8" stroke-width="1.6" fill="none"/><path d="M320.4 103.6 L289.4 162.9 M320.4 103.6 L359.9 154.3 M320.4 103.6 L326.5 120.6 M326.5 120.6 L359.9 154.3 M289.4 162.9 L327.2 167.2 M327.2 167.2 L359.9 154.3 M320.4 103.6 L280.0 264.3 M320.4 103.6 L298.9 274.7 M320.4 103.6 L318.6 262.6 M320.4 103.6 L321.2 211.0 M320.4 103.6 L331.5 276.4 M320.4 103.6 L289.4 311.6 M289.4 162.9 L280.0 264.3 M289.4 162.9 L318.6 262.6 M289.4 162.9 L353.0 281.5 M289.4 162.9 L331.5 276.4 M289.4 162.9 L349.6 248.9 M289.4 162.9 L298.9 274.7 M359.9 154.3 L353.0 281.5 M359.9 154.3 L349.6 248.9 M359.9 154.3 L280.0 264.3 M359.9 154.3 L318.6 262.6 M359.9 154.3 L298.9 274.7 M359.9 154.3 L407.2 274.7 M327.2 167.2 L280.0 264.3 M327.2 167.2 L353.0 281.5 M327.2 167.2 L331.5 276.4 M326.5 120.6 L298.9 274.7 M326.5 120.6 L318.6 262.6 M326.5 120.6 L289.4 311.6 M321.2 211.0 L280.0 264.3 M321.2 211.0 L353.0 281.5 M321.2 211.0 L349.6 248.9 M321.2 211.0 L298.9 274.7 M359.9 154.3 L383.0 247.0 M383.0 247.0 L407.2 274.7 M289.4 162.9 L289.4 311.6 M359.9 154.3 L289.4 311.6 M327.2 167.2 L298.9 274.7" stroke="#fff" stroke-width="1.6" fill="none"/><path d="M201.7 298.7 L280.0 264.0 L318.0 257.0 L349.0 247.0 L407.0 275.0 L374.0 285.0 L422.0 344.0 L289.0 315.0 L205.0 312.0 Z" fill="#fff"/><path d="M275.4 266.8 l12.2 0.6 M377.4 262.0 l11.4 2.1 M327.3 287.7 l15.7 0.8 M323.1 265.3 l9.6 0.5 M326.0 301.6 l12.5 0.6 M328.2 308.3 l9.1 0.5 M324.7 306.6 l10.5 4.7 M368.3 293.6 l15.2 4.5 M352.3 274.7 l11.3 5.1 M388.4 316.0 l8.2 0.4 M233.2 289.5 l13.3 2.4 M323.4 321.1 l14.0 4.2 M351.5 304.5 l11.4 5.1 M264.3 313.2 l5.7 1.7 M377.5 278.2 l9.2 2.8 M225.5 292.2 l11.0 2.0 M377.0 327.4 l8.1 3.6 M287.0 273.6 l5.9 1.1 M308.4 304.1 l7.9 0.4 M238.9 299.4 l11.7 3.5 M314.7 306.5 l12.4 0.6 M323.7 287.8 l9.3 4.2 M339.0 259.3 l5.7 1.0 M299.3 263.3 l11.6 0.6 M334.9 266.6 l7.8 2.3 M332.5 294.3 l6.3 2.8 M308.2 261.3 l6.1 1.8 M360.8 294.7 l12.6 0.6 M283.2 312.7 l15.1 4.5 M351.7 276.2 l9.0 1.6 M281.9 272.9 l11.0 3.3 M339.5 306.1 l13.7 2.5 M374.2 323.6 l13.1 2.4 M250.0 295.9 l13.0 0.7 M371.0 294.1 l7.1 2.1 M411.5 335.2 l9.0 1.6 M229.9 294.0 l8.7 3.9 M381.3 294.8 l12.2 0.6 M380.1 264.2 l9.3 1.7 M307.0 269.2 l13.7 4.1 M357.0 293.4 l13.2 0.7 M357.6 268.5 l6.4 1.2 M330.1 293.6 l12.2 5.5 M343.7 283.8 l11.0 2.0 M357.9 262.7 l13.2 2.4 M378.4 271.9 l7.8 2.3 M311.7 318.9 l8.6 3.9 M360.7 330.3 l12.3 5.5 M378.6 328.6 l6.4 1.2 M299.2 269.6 l5.0 0.9 M244.3 294.2 l13.0 0.6 M275.8 298.1 l11.1 0.6 M229.0 292.4 l5.3 0.3 M299.9 306.1 l10.6 1.9 M351.0 292.4 l10.9 4.9 M313.1 275.1 l10.8 3.2 M398.2 329.9 l7.2 3.3 M346.2 320.6 l14.9 2.7 M284.1 275.5 l6.5 2.9 M290.6 295.4 l15.9 2.9 M242.1 290.7 l10.7 3.2 M295.4 284.3 l6.0 1.8 M213.0 301.1 l9.8 0.5 M287.8 298.0 l8.2 0.4 M394.7 269.4 l13.3 6.0 M383.2 311.5 l15.4 6.9 M326.0 313.5 l6.0 0.3 M372.9 269.6 l14.8 4.5 M373.3 261.1 l14.4 0.7 M336.4 257.7 l12.8 0.6 M337.9 299.1 l7.3 3.3 M311.5 269.1 l8.8 0.4 M212.8 297.0 l15.8 7.1 M259.4 292.0 l12.2 5.5 M343.6 300.4 l14.8 4.4 M353.9 308.1 l9.5 2.8 M211.9 307.2 l14.7 6.6 M381.5 328.0 l12.4 3.7 M331.7 312.9 l5.5 1.0 M241.3 291.9 l7.9 2.4 M272.5 284.3 l5.0 2.3 M343.5 275.1 l13.5 0.7 M256.7 303.8 l10.8 1.9 M343.8 314.9 l14.7 6.6 M365.7 315.3 l10.4 3.1 M357.5 308.7 l5.5 2.5 M359.4 323.0 l6.5 0.3 M378.4 303.6 l14.8 2.7 M286.2 292.4 l5.6 0.3 M337.4 311.9 l10.4 0.5 M302.7 260.0 l15.3 0.8 M344.2 259.6 l13.1 3.9 M374.9 325.9 l7.6 1.4 M256.3 309.2 l10.1 4.5 M338.7 270.9 l11.6 3.5 M271.4 302.3 l5.1 0.3 M309.4 314.3 l8.1 3.7 M304.6 264.1 l14.8 2.7 M306.0 278.6 l5.8 2.6 M396.9 333.1 l5.8 0.3 M238.1 298.5 l15.5 2.8 M332.7 307.7 l8.1 0.4 M353.2 273.7 l14.9 6.7 M289.8 267.5 l15.4 7.0 M294.3 286.0 l6.3 1.9 M381.0 264.2 l15.2 0.8 M393.8 278.6 l9.1 4.1 M363.9 326.6 l8.1 0.4 M380.1 278.3 l15.3 2.8 M370.0 290.4 l5.3 2.4 M396.3 334.0 l11.0 0.6 M341.1 278.3 l5.5 1.0 M244.0 289.3 l8.1 2.4 M262.3 309.8 l8.3 3.7 M233.5 308.7 l5.8 2.6 M321.8 292.5 l8.7 3.9 M296.6 300.6 l7.7 1.4 M258.0 276.0 l11.3 0.6 M362.7 289.1 l9.6 1.7 M286.3 282.7 l5.7 1.7 M326.7 284.6 l12.6 2.3" stroke="#000" stroke-width="1.8"/><rect x="324.0" y="118.1" width="5" height="5" fill="#80e080"/><rect x="357.9" y="152.3" width="4" height="4" fill="#80e080"/><rect x="324.2" y="164.2" width="6" height="6" fill="#60d060"/><rect x="287.4" y="160.9" width="4" height="4" fill="#e070a0"/><rect x="318.7" y="208.5" width="5" height="5" fill="#e06080"/><rect x="315.1" y="259.1" width="7" height="7" fill="#e040a0"/><rect x="328.5" y="273.4" width="6" height="6" fill="#c05070"/><rect x="349.5" y="278.0" width="7" height="7" fill="#d04060"/><rect x="346.6" y="245.9" width="6" height="6" fill="#b08060"/><rect x="277.5" y="261.8" width="5" height="5" fill="#3a8070"/><rect x="295.4" y="271.2" width="7" height="7" fill="#808088"/><rect x="286.9" y="309.1" width="5" height="5" fill="#806090"/><rect x="199.7" y="296.7" width="4" height="4" fill="#2060d0"/><rect x="203.2" y="309.6" width="4" height="4" fill="#2060d0"/><rect x="419.8" y="341.4" width="4" height="4" fill="#c0a000"/><circle cx="255.0" cy="3.9" r="15" fill="#fff"/><circle cx="171.8" cy="151.4" r="12.6" fill="#00ffff"/><circle cx="537.4" cy="142.4" r="15.7" fill="#ffff00"/><circle cx="383.2" cy="246.7" r="12" fill="#00ff00"/><circle cx="135.9" cy="311.9" r="22" fill="#ff00ff"/><circle cx="78.8" cy="384.7" r="15" fill="#0000ff"/><circle cx="496.9" cy="448.1" r="19" fill="#ff0000"/></svg><div style="position:absolute;left:2602px;top:1632px;width:830px;height:448px;background:#ececec;border-radius:20px;box-shadow:0 8px 28px rgba(0,0,0,0.3), 0 0 0 1px rgba(0,0,0,0.12)"></div><div style="position:absolute;left:2602px;top:1632px;width:830px;height:55px;background:#f4f4f4;border-radius:20px 20px 0 0;border-bottom:1px solid #d6d6d6;box-sizing:border-box"></div><div style="position:absolute;left:2618px;top:1648px;width:24px;height:24px;border-radius:50%;background:#dedede;box-sizing:border-box;border:1px solid #cdcdcd"></div><div style="position:absolute;left:2658px;top:1648px;width:24px;height:24px;border-radius:50%;background:#dedede;box-sizing:border-box;border:1px solid #cdcdcd"></div><div style="position:absolute;left:2698px;top:1648px;width:24px;height:24px;border-radius:50%;background:#dedede;box-sizing:border-box;border:1px solid #cdcdcd"></div><div style="position:absolute;left:2010.7px;width:2000px;text-align:center;top:1645.1px;font-size:27px;line-height:27px;color:#222;font-weight:bold;letter-spacing:0.3px;white-space:pre;">Control Panel</div><div style="position:absolute;left:2633.0px;top:1714.0px;font-size:26px;line-height:26px;color:#000;font-weight:normal;letter-spacing:0.6px;white-space:pre;">Data Maps:</div><div style="position:absolute;left:2782px;top:1703px;width:397px;height:46px;border:2px solid #c0c0c0;border-right-color:#fafafa;border-bottom-color:#fafafa;box-sizing:border-box"></div><div style="position:absolute;left:2796px;top:1706px;width:371px;height:39px;background:#fff;border-radius:9px;box-shadow:0 1px 2px rgba(0,0,0,0.25), 0 0 0 1px rgba(0,0,0,0.06)"></div><svg style="position:absolute;left:3131px;top:1710px" width="32" height="31"><path d="M10 12.5 L16 6.5 L22 12.5 M10 18.5 L16 24.5 L22 18.5" stroke="#222" stroke-width="2.6" fill="none"/></svg><div style="position:absolute;left:2821.0px;top:1713.0px;font-size:26px;line-height:26px;color:#000;font-weight:normal;letter-spacing:0.6px;white-space:pre;">Raw Data Matrix</div><div style="position:absolute;left:3226px;top:1706px;width:148px;height:40px;background:#fff;border-radius:9px;box-shadow:0 1px 2px rgba(0,0,0,0.25)"></div><div style="position:absolute;left:2300.0px;width:2000px;text-align:center;top:1713.0px;font-size:26px;line-height:26px;color:#000;font-weight:normal;letter-spacing:0.6px;white-space:pre;">Options</div><div style="position:absolute;left:2616px;top:1777px;width:32px;height:300px;background:#e2e2e2;border-radius:14px 0 0 14px"></div><div style="position:absolute;left:2616px;top:1777px;width:32px;height:248px;background:#fff;border-radius:12px 0 0 0;box-shadow:0 1px 2px rgba(0,0,0,0.2)"></div><div style="position:absolute;left:2632px;top:1900px;width:0;height:0"><div style="position:absolute;left:-40px;top:-13px;width:80px;height:26px;text-align:center;font-size:22px;line-height:26px;color:#bbb;transform:rotate(-90deg)">Color</div></div><svg style="position:absolute;left:2618px;top:2046px" width="22" height="20"><path d="M1 2 L21 2 L11 19 Z" fill="#000"/></svg><div style="position:absolute;left:2648px;top:1781px;width:756px;height:278px;background:#e6e6e6;border-radius:0 12px 12px 0"></div><div style="position:absolute;left:2662px;top:1789px;width:729px;height:268px;border:2px solid #b4b4b4;border-right-color:#fff;border-bottom-color:#fff;box-sizing:border-box;background:#ececec"></div><div style="position:absolute;left:2663px;top:1790px;width:727px;height:266px;border:1px solid #fff;border-right-color:#a8a8a8;border-bottom-color:#a8a8a8;box-sizing:border-box"></div><div style="position:absolute;left:2760px;top:1809px;width:472px;height:40px;background:#fff;border-radius:10px;box-shadow:0 1px 2px rgba(0,0,0,0.25)"></div><div style="position:absolute;left:2774px;top:1814px;width:403px;height:31px;border:2px solid #000;box-sizing:border-box;background:#fff"></div><div style="position:absolute;left:2777.8px;top:1822.6px;width:50.8px;height:5.5px;background:#6a3050"></div><div style="position:absolute;left:2777.8px;top:1827.6px;width:50.8px;height:5.1px;background:#4ab080"></div><div style="position:absolute;left:2777.8px;top:1832.2px;width:50.8px;height:6.5px;background:#7ab870"></div><div style="position:absolute;left:2777.8px;top:1838.2px;width:50.8px;height:4.0px;background:#9060e0"></div><div style="position:absolute;left:2828.1px;top:1818.0px;width:50.1px;height:6.5px;background:#8a70e0"></div><div style="position:absolute;left:2828.1px;top:1824.0px;width:50.1px;height:5.1px;background:#7a3060"></div><div style="position:absolute;left:2828.1px;top:1828.6px;width:50.1px;height:5.8px;background:#8ac080"></div><div style="position:absolute;left:2828.1px;top:1834.0px;width:50.1px;height:4.8px;background:#c01878"></div><div style="position:absolute;left:2828.1px;top:1838.2px;width:50.1px;height:4.0px;background:#d02070"></div><div style="position:absolute;left:2877.8px;top:1832.2px;width:100.8px;height:5.1px;background:#705868"></div><div style="position:absolute;left:2877.8px;top:1836.8px;width:100.8px;height:5.5px;background:#a0b090"></div><div style="position:absolute;left:2978.1px;top:1818.0px;width:44.8px;height:5.1px;background:#6a3050"></div><div style="position:absolute;left:2978.1px;top:1822.6px;width:44.8px;height:5.5px;background:#8a70e0"></div><div style="position:absolute;left:2978.1px;top:1827.6px;width:44.8px;height:9.7px;background:#70f070"></div><div style="position:absolute;left:2978.1px;top:1836.8px;width:44.8px;height:5.5px;background:#f05858"></div><div style="position:absolute;left:3022.4px;top:1818.0px;width:50.1px;height:5.1px;background:#6a3050"></div><div style="position:absolute;left:3022.4px;top:1822.6px;width:50.1px;height:5.5px;background:#8a70e0"></div><div style="position:absolute;left:3022.4px;top:1827.6px;width:50.1px;height:5.1px;background:#4a9070"></div><div style="position:absolute;left:3022.4px;top:1832.2px;width:50.1px;height:5.1px;background:#70f070"></div><div style="position:absolute;left:3022.4px;top:1836.8px;width:50.1px;height:5.5px;background:#f05858"></div><div style="position:absolute;left:3072.0px;top:1832.2px;width:100.5px;height:5.1px;background:#8aa890"></div><div style="position:absolute;left:3072.0px;top:1836.8px;width:100.5px;height:5.5px;background:#6a3858"></div><svg style="position:absolute;left:3200px;top:1814px" width="24" height="32"><path d="M5 12 L12 5 L19 12 M5 20 L12 27 L19 20" stroke="#222" stroke-width="2.4" fill="none"/></svg><div style="position:absolute;left:3258px;top:1810px;width:42px;height:44px;background:#fff;border-radius:8px;box-shadow:0 1px 2px rgba(0,0,0,0.25)"></div><svg style="position:absolute;left:3266px;top:1818px" width="26" height="28"><path d="M8 10 Q12 4 18 8 M16 4 L19 8 L14 10" stroke="#666" stroke-width="2" fill="none"/><path d="M18 18 Q14 24 8 20 M10 24 L7 20 L12 18" stroke="#666" stroke-width="2" fill="none"/></svg><div style="position:absolute;left:2754px;top:1882px;width:303px;height:81px;border:2px solid #b0b0b0;box-sizing:border-box"></div><div style="position:absolute;left:2764px;top:1876px;width:208px;height:16px;background:#ececec"></div><div style="position:absolute;left:2768.6px;top:1872.0px;font-size:26px;line-height:26px;color:#000;font-weight:normal;letter-spacing:0px;white-space:pre;">Display Condition</div><div style="position:absolute;left:2771px;top:1908px;width:269px;height:40px;background:#f4f4f4;border-radius:9px;box-shadow:0 1px 2px rgba(0,0,0,0.15)"></div><div style="position:absolute;left:2796.0px;top:1915.5px;font-size:26px;line-height:26px;color:#8a8a8a;font-weight:normal;letter-spacing:0.5px;white-space:pre;">Range: Matrix</div><svg style="position:absolute;left:3020px;top:1912px" width="20" height="32"><path d="M4 12 L10 5 L16 12 M4 20 L10 27 L16 20" stroke="#9a9a9a" stroke-width="2.2" fill="none"/></svg><div style="position:absolute;left:3076px;top:1882px;width:221px;height:81px;border:2px solid #b0b0b0;box-sizing:border-box"></div><div style="position:absolute;left:3086px;top:1876px;width:176px;height:16px;background:#ececec"></div><div style="position:absolute;left:3090.5px;top:1872.0px;font-size:26px;line-height:26px;color:#000;font-weight:normal;letter-spacing:0px;white-space:pre;">Missing Values</div><div style="position:absolute;left:3094px;top:1908px;width:186px;height:40px;background:#fff;border-radius:9px;box-shadow:0 1px 2px rgba(0,0,0,0.25)"></div><div style="position:absolute;left:3121px;top:1915px;width:26px;height:26px;border:2px solid #000;box-sizing:border-box;background:#fff"></div><div style="position:absolute;left:3156.0px;top:1914.8px;font-size:25px;line-height:25px;color:#000;font-weight:bold;letter-spacing:0px;white-space:pre;font-family:'Liberation Serif',serif">NA</div><svg style="position:absolute;left:3260px;top:1912px" width="20" height="32"><path d="M4 12 L10 5 L16 12 M4 20 L10 27 L16 20" stroke="#222" stroke-width="2.4" fill="none"/></svg>
</div></body></html>
